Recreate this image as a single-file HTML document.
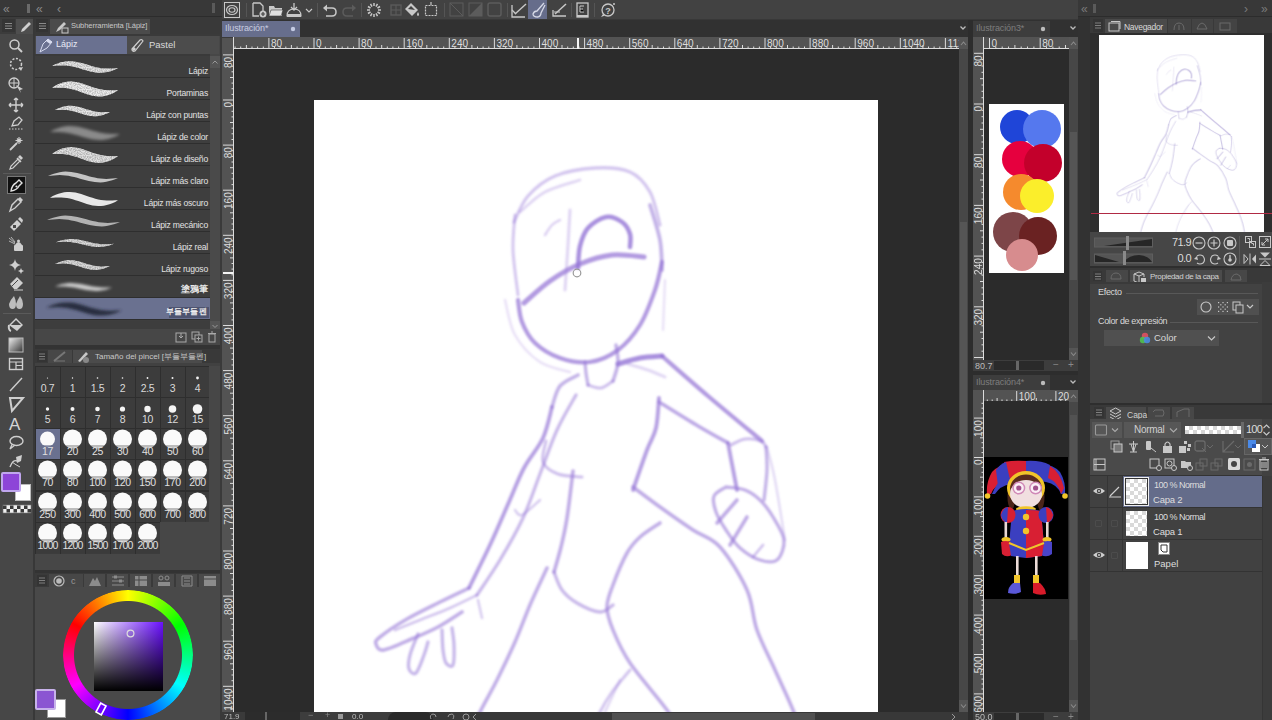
<!DOCTYPE html>
<html><head><meta charset="utf-8">
<style>
*{margin:0;padding:0;box-sizing:border-box}
html,body{width:1272px;height:720px;overflow:hidden;background:#2f2f2f;font-family:"Liberation Sans",sans-serif;color:#ddd}
.a{position:absolute}
.t{white-space:nowrap;line-height:1}
svg{overflow:visible}
</style></head><body>
<svg width="0" height="0" style="position:absolute"><defs><filter id="bl1" x="-20%" y="-50%" width="140%" height="200%"><feGaussianBlur stdDeviation="0.6"/></filter><filter id="sk" x="-5%" y="-5%" width="110%" height="110%"><feGaussianBlur stdDeviation="1.0"/></filter><filter id="skn" x="-5%" y="-5%" width="110%" height="110%"><feGaussianBlur stdDeviation="1.2"/></filter><filter id="gr" x="-10%" y="-50%" width="120%" height="200%"><feTurbulence type="fractalNoise" baseFrequency="0.8" numOctaves="1" seed="3" result="n"/><feColorMatrix in="n" type="matrix" values="0 0 0 0 1  0 0 0 0 1  0 0 0 0 1  0 0 0 -2.0 1.7" result="m"/><feComposite in="SourceGraphic" in2="m" operator="in" result="c"/><feGaussianBlur in="c" stdDeviation="0.5"/></filter><filter id="bl2" x="-20%" y="-50%" width="140%" height="200%"><feGaussianBlur stdDeviation="1.4"/></filter></defs></svg>
<div class="a" style="left:0px;top:0px;width:222px;height:17px;background:#383838;"></div>
<div class="a" style="left:0px;top:16px;width:222px;height:1px;background:#2c2c2c;"></div>
<div class="a t" style="left:3px;top:3px;font-size:12px;color:#8a8a8a;">«</div>
<div class="a" style="left:27px;top:4px;width:3px;height:9px;background:#6a6a6a;"></div>
<div class="a t" style="left:36px;top:3px;font-size:12px;color:#8a8a8a;">«</div>
<div class="a t" style="left:57px;top:3px;font-size:12px;color:#8a8a8a;">‹</div>
<div class="a" style="left:212px;top:3px;width:3px;height:10px;background:#5a5a5a;"></div>
<div class="a" style="left:0px;top:17px;width:33px;height:703px;background:#474747;"></div>
<div class="a" style="left:33px;top:17px;width:2px;height:703px;background:#383838;"></div>
<div class="a" style="left:0px;top:17px;width:33px;height:17px;background:#3c3c3c;"></div>
<div class="a" style="left:2px;top:19px;width:13px;height:13px;background:#353535;"></div>
<svg class="a" style="left:4px;top:22px;" width="9" height="8" viewBox="0 0 9 8"><path d="M1,1.5H8M1,4H8M1,6.5H8" stroke="#8a8a8a" stroke-width="1"/></svg>
<div class="a" style="left:16px;top:19px;width:17px;height:15px;background:#4e4e4e;"></div>
<svg class="a" style="left:19px;top:21px;" width="12" height="12" viewBox="0 0 12 12"><path d="M2,11 L3,8 L10,1 L12,3 L5,10 Z" fill="#cfcfcf"/></svg>
<svg class="a" style="left:8px;top:38px;" width="16" height="16" viewBox="0 0 16 16"><circle cx="6.5" cy="6.5" r="4.5" stroke="#cfcfcf" stroke-width="1.5" fill="none"/><path d="M10,10 L14,14" stroke="#cfcfcf" stroke-width="2"/></svg>
<svg class="a" style="left:8px;top:56px;" width="16" height="16" viewBox="0 0 16 16"><circle cx="8" cy="8" r="5.5" stroke="#cfcfcf" stroke-width="1.5" fill="none" stroke-dasharray="2 1.6"/><path d="M11,12 L15,11 L13,15Z" fill="#cfcfcf"/></svg>
<svg class="a" style="left:8px;top:77px;" width="16" height="16" viewBox="0 0 16 16"><circle cx="6" cy="6" r="5" stroke="#cfcfcf" stroke-width="1.3" fill="none"/><path d="M1,6H11M6,1V11" stroke="#cfcfcf" stroke-width="1"/><path d="M8,8 L15,12 L12,13 L13,16Z" fill="#cfcfcf"/></svg>
<svg class="a" style="left:8px;top:97px;" width="16" height="16" viewBox="0 0 16 16"><path d="M8,1V15M1,8H15M8,1L6,3M8,1L10,3M8,15L6,13M8,15L10,13M1,8L3,6M1,8L3,10M15,8L13,6M15,8L13,10" stroke="#cfcfcf" stroke-width="1.4" fill="none"/></svg>
<svg class="a" style="left:8px;top:115px;" width="16" height="16" viewBox="0 0 16 16"><path d="M4,11 L6,6 L11,2 L14,5 L10,10 Z" stroke="#cfcfcf" stroke-width="1.3" fill="none"/><path d="M1,14H15" stroke="#cfcfcf" stroke-width="1" stroke-dasharray="1.5 1.5"/></svg>
<svg class="a" style="left:8px;top:135px;" width="16" height="16" viewBox="0 0 16 16"><path d="M2,15 L9,8" stroke="#cfcfcf" stroke-width="1.8"/><path d="M11,2V9M7.5,5.5H14.5M9,3.5L13,7.5M13,3.5L9,7.5" stroke="#cfcfcf" stroke-width="1.1"/></svg>
<svg class="a" style="left:8px;top:154px;" width="16" height="16" viewBox="0 0 16 16"><path d="M2,15 L3,12 L10,5 L12,7 L5,14Z" stroke="#cfcfcf" stroke-width="1.2" fill="none"/><path d="M10,3 L12,1 L15,4 L13,6Z" fill="#cfcfcf"/><path d="M9,4 L13,8" stroke="#cfcfcf" stroke-width="1.5"/></svg>
<div class="a" style="left:7px;top:176px;width:19px;height:18px;background:#111;border:1px solid #777"></div>
<svg class="a" style="left:8px;top:177px;" width="17" height="16" viewBox="0 0 17 16"><path d="M3,14 Q4,8 8,6 L11,3 L14,6 L11,9 Q9,13 3,14Z" stroke="#e0e0e0" stroke-width="1.4" fill="none"/><circle cx="8.5" cy="9.5" r="1.1" fill="#e0e0e0"/></svg>
<div class="a" style="left:3px;top:173px;width:28px;height:1px;background:#5a5a5a;"></div>
<svg class="a" style="left:8px;top:196px;" width="16" height="16" viewBox="0 0 16 16"><path d="M2,15 L4,9 L10,3 L13,6 L7,12Z" stroke="#cfcfcf" stroke-width="1.4" fill="none"/><path d="M10,3 L12,1 L15,4 L13,6Z" fill="#cfcfcf"/></svg>
<svg class="a" style="left:8px;top:216px;" width="16" height="16" viewBox="0 0 16 16"><path d="M2,11 L9,4 L13,8 L6,15Z" fill="#cfcfcf"/><path d="M10,3 L12,1 L15,4 L14,7Z" fill="#cfcfcf"/><rect x="5" y="9" width="3" height="3" fill="#474747"/></svg>
<svg class="a" style="left:8px;top:236px;" width="16" height="16" viewBox="0 0 16 16"><path d="M1,2 L7,7M1,5 L7,8M3,1 L7,6" stroke="#cfcfcf" stroke-width="0.8"/><rect x="6" y="9" width="9" height="6" rx="1" fill="#cfcfcf"/><path d="M7,9 Q10.5,3 14,9" fill="#cfcfcf"/><circle cx="10.5" cy="5" r="1.5" fill="#cfcfcf"/></svg>
<svg class="a" style="left:8px;top:258px;" width="16" height="16" viewBox="0 0 16 16"><path d="M7,1 Q7.5,6 13,7 Q7.5,8 7,13 Q6.5,8 1,7 Q6.5,6 7,1Z" fill="#cfcfcf"/><path d="M13,10 Q13.3,12.5 16,13 Q13.3,13.5 13,16 Q12.7,13.5 10,13 Q12.7,12.5 13,10Z" fill="#cfcfcf"/></svg>
<svg class="a" style="left:8px;top:275px;" width="16" height="16" viewBox="0 0 16 16"><path d="M2,9 L9,2 L15,8 L9,14 L6,14Z" fill="#cfcfcf"/><path d="M4,11 L10,5" stroke="#474747" stroke-width="1"/><path d="M6,15H15" stroke="#cfcfcf" stroke-width="1"/></svg>
<svg class="a" style="left:8px;top:294px;" width="16" height="16" viewBox="0 0 16 16"><path d="M1,10 Q3,5 6,2 Q8,6 8,10 Q8,15 4.5,15 Q1,15 1,10Z" fill="#bdbdbd"/><path d="M8,10 Q10,5 12,2 Q15,6 15,10 Q15,15 11.5,15 Q8,15 8,10Z" fill="#bdbdbd"/></svg>
<div class="a" style="left:3px;top:313px;width:28px;height:1px;background:#5a5a5a;"></div>
<svg class="a" style="left:8px;top:317px;" width="16" height="16" viewBox="0 0 16 16"><path d="M1,8 L8,1 L15,8 L9,14 Z" fill="#cfcfcf"/><path d="M3,8 L8,3 L13,8 Z" fill="#474747"/><path d="M1,8 Q0,13 3,14" stroke="#cfcfcf" stroke-width="2" fill="none"/></svg>
<svg class="a" style="left:8px;top:337px;" width="16" height="16" viewBox="0 0 16 16"><defs><linearGradient id="gg" x1="0" y1="0" x2="1" y2="1"><stop offset="0" stop-color="#eee"/><stop offset="1" stop-color="#333"/></linearGradient></defs><rect x="1" y="1" width="14" height="14" fill="url(#gg)" stroke="#bbb" stroke-width="1"/></svg>
<svg class="a" style="left:8px;top:356px;" width="16" height="16" viewBox="0 0 16 16"><rect x="1.5" y="2.5" width="13" height="11" stroke="#cfcfcf" stroke-width="1.4" fill="none"/><path d="M1.5,6H14.5M8,6V13.5M8,9.5H14.5" stroke="#cfcfcf" stroke-width="1.2"/></svg>
<svg class="a" style="left:8px;top:376px;" width="16" height="16" viewBox="0 0 16 16"><path d="M2,15 L14,2" stroke="#cfcfcf" stroke-width="1.4"/></svg>
<svg class="a" style="left:8px;top:396px;" width="16" height="16" viewBox="0 0 16 16"><path d="M2,2 L15,2 L4,15Z" stroke="#cfcfcf" stroke-width="2" fill="none"/></svg>
<div class="a t" style="left:9px;top:416px;font-size:17px;color:#d5d5d5;">A</div>
<svg class="a" style="left:8px;top:434px;" width="16" height="16" viewBox="0 0 16 16"><ellipse cx="8.5" cy="7" rx="6.5" ry="4.5" stroke="#cfcfcf" stroke-width="1.4" fill="none"/><path d="M4,10.5 L2,15 L7,11" stroke="#cfcfcf" stroke-width="1.3" fill="none"/></svg>
<svg class="a" style="left:8px;top:453px;" width="16" height="16" viewBox="0 0 16 16"><path d="M2,14 Q5,6 9,8" stroke="#cfcfcf" stroke-width="1.4" fill="none"/><path d="M8,4 L14,2 L13,8 L9,10Z" fill="#cfcfcf"/><path d="M4,9 Q8,12 12,14" stroke="#cfcfcf" stroke-width="1" fill="none"/></svg>
<div class="a" style="left:15px;top:484px;width:16px;height:17px;background:#ffffff;border:1px solid #bbb"></div>
<div class="a" style="left:1px;top:472px;width:20px;height:20px;background:#8d45d8;border:2px solid #c0a6ee;border-radius:2px"></div>
<svg class="a" style="left:3px;top:505px;" width="28" height="8" viewBox="0 0 28 8"><rect x="0" y="0" width="28" height="8" fill="#f0f0f0" stroke="#777" stroke-width="0.6"/><rect x="0.0" y="0.5" width="3.5" height="3.5" fill="#3a3a3a"/><rect x="3.5" y="4.0" width="3.5" height="3.5" fill="#3a3a3a"/><rect x="7.0" y="0.5" width="3.5" height="3.5" fill="#3a3a3a"/><rect x="10.5" y="4.0" width="3.5" height="3.5" fill="#3a3a3a"/><rect x="14.0" y="0.5" width="3.5" height="3.5" fill="#3a3a3a"/><rect x="17.5" y="4.0" width="3.5" height="3.5" fill="#3a3a3a"/><rect x="21.0" y="0.5" width="3.5" height="3.5" fill="#3a3a3a"/><rect x="24.5" y="4.0" width="3.5" height="3.5" fill="#3a3a3a"/></svg>
<div class="a" style="left:35px;top:17px;width:185px;height:328px;background:#474747;"></div>
<div class="a" style="left:35px;top:17px;width:185px;height:18px;background:#393939;"></div>
<div class="a" style="left:36px;top:19px;width:12px;height:13px;background:#343434;"></div>
<svg class="a" style="left:38px;top:22px;" width="9" height="8" viewBox="0 0 9 8"><path d="M1,1.5H8M1,4H8M1,6.5H8" stroke="#8a8a8a" stroke-width="1"/></svg>
<div class="a" style="left:50px;top:19px;width:100px;height:15px;background:#4b4b4b;"></div>
<svg class="a" style="left:55px;top:21px;" width="14" height="12" viewBox="0 0 14 12"><path d="M1,11 L3,7 L9,1 L11,3 L5,9Z" fill="#c8c8c8"/><rect x="7" y="7" width="6" height="5" stroke="#c8c8c8" stroke-width="1" fill="none"/></svg>
<div class="a t" style="left:71px;top:22px;font-size:7.6px;color:#c8c8c8;letter-spacing:-0.1px">Subherramienta [Lápiz]</div>
<div class="a" style="left:35px;top:34px;width:185px;height:2px;background:#3a3a3a;"></div>
<div class="a" style="left:36px;top:36px;width:91px;height:18px;background:#6a7190;"></div>
<svg class="a" style="left:39px;top:38px;" width="14" height="15" viewBox="0 0 14 15"><path d="M1,14 L4,6 L9,1 L13,4 L8,10Z" stroke="#d8dcef" stroke-width="1" fill="none"/><path d="M9,1 L13,4 L11,6 L7,3Z" fill="#d8dcef"/></svg>
<div class="a t" style="left:56px;top:40px;font-size:9px;color:#e8eaf5;">Lápiz</div>
<div class="a" style="left:127px;top:36px;width:92px;height:18px;background:#4c4c4c;"></div>
<svg class="a" style="left:130px;top:38px;" width="14" height="15" viewBox="0 0 14 15"><path d="M2,11 L10,2 Q12,1 13,3 L5,13 Q3,14 2,12Z" stroke="#d0d0d0" stroke-width="1.2" fill="none"/><path d="M2,12 L4,9 L6,11 L4,13Z" fill="#d0d0d0"/></svg>
<div class="a t" style="left:149px;top:40px;font-size:9.5px;color:#dadada;">Pastel</div>
<div class="a" style="left:35px;top:54px;width:175px;height:267px;background:#3e3e3e;"></div>
<div class="a" style="left:35px;top:77px;width:175px;height:1px;background:#2e2e2e;"></div>
<svg class="a" style="left:0px;top:56px;" width="220" height="22" viewBox="0 0 220 22"><path d="M52.0,9.9 L54.8,8.6 L57.5,7.5 L60.2,6.6 L63.0,5.9 L65.8,5.5 L68.5,5.3 L71.2,5.3 L74.0,5.5 L76.8,5.9 L79.5,6.5 L82.2,7.2 L85.0,8.0 L87.8,8.8 L90.5,9.7 L93.2,10.5 L96.0,11.2 L98.8,11.7 L101.5,12.2 L104.2,12.5 L107.0,12.6 L109.8,12.6 L112.5,12.5 L115.2,12.2 L118.0,12.1 L118.0,12.1 L115.2,13.4 L112.5,14.5 L109.8,15.4 L107.0,16.1 L104.2,16.5 L101.5,16.7 L98.8,16.7 L96.0,16.5 L93.2,16.1 L90.5,15.5 L87.8,14.8 L85.0,14.0 L82.2,13.2 L79.5,12.3 L76.8,11.5 L74.0,10.8 L71.2,10.3 L68.5,9.8 L65.8,9.5 L63.0,9.4 L60.2,9.4 L57.5,9.5 L54.8,9.8 L52.0,9.9Z" fill="#e8e8e8" opacity="0.55" filter="url(#bl1)"/><path d="M52.0,9.9 L54.8,8.6 L57.5,7.5 L60.2,6.6 L63.0,5.9 L65.8,5.5 L68.5,5.3 L71.2,5.3 L74.0,5.5 L76.8,5.9 L79.5,6.5 L82.2,7.2 L85.0,8.0 L87.8,8.8 L90.5,9.7 L93.2,10.5 L96.0,11.2 L98.8,11.7 L101.5,12.2 L104.2,12.5 L107.0,12.6 L109.8,12.6 L112.5,12.5 L115.2,12.2 L118.0,12.1 L118.0,12.1 L115.2,13.4 L112.5,14.5 L109.8,15.4 L107.0,16.1 L104.2,16.5 L101.5,16.7 L98.8,16.7 L96.0,16.5 L93.2,16.1 L90.5,15.5 L87.8,14.8 L85.0,14.0 L82.2,13.2 L79.5,12.3 L76.8,11.5 L74.0,10.8 L71.2,10.3 L68.5,9.8 L65.8,9.5 L63.0,9.4 L60.2,9.4 L57.5,9.5 L54.8,9.8 L52.0,9.9Z" fill="#e8e8e8" opacity="1.0" filter="url(#gr)"/></svg>
<div class="a t" style="right:1064px;top:67px;font-size:8.6px;color:#e2e2e2;text-align:right;letter-spacing:-0.2px">Lápiz</div>
<div class="a" style="left:35px;top:99px;width:175px;height:1px;background:#2e2e2e;"></div>
<svg class="a" style="left:0px;top:78px;" width="220" height="22" viewBox="0 0 220 22"><path d="M52.0,9.8 L54.8,8.0 L57.5,6.6 L60.2,5.5 L63.0,4.6 L65.8,4.0 L68.5,3.6 L71.2,3.6 L74.0,3.8 L76.8,4.2 L79.5,4.8 L82.2,5.6 L85.0,6.5 L87.8,7.5 L90.5,8.4 L93.2,9.4 L96.0,10.2 L98.8,11.0 L101.5,11.5 L104.2,12.0 L107.0,12.2 L109.8,12.3 L112.5,12.3 L115.2,12.2 L118.0,12.2 L118.0,12.2 L115.2,14.0 L112.5,15.4 L109.8,16.5 L107.0,17.4 L104.2,18.0 L101.5,18.4 L98.8,18.4 L96.0,18.2 L93.2,17.8 L90.5,17.2 L87.8,16.4 L85.0,15.5 L82.2,14.5 L79.5,13.6 L76.8,12.6 L74.0,11.8 L71.2,11.0 L68.5,10.5 L65.8,10.0 L63.0,9.8 L60.2,9.7 L57.5,9.7 L54.8,9.8 L52.0,9.8Z" fill="#f0f0f0" opacity="0.55" filter="url(#bl1)"/><path d="M52.0,9.8 L54.8,8.0 L57.5,6.6 L60.2,5.5 L63.0,4.6 L65.8,4.0 L68.5,3.6 L71.2,3.6 L74.0,3.8 L76.8,4.2 L79.5,4.8 L82.2,5.6 L85.0,6.5 L87.8,7.5 L90.5,8.4 L93.2,9.4 L96.0,10.2 L98.8,11.0 L101.5,11.5 L104.2,12.0 L107.0,12.2 L109.8,12.3 L112.5,12.3 L115.2,12.2 L118.0,12.2 L118.0,12.2 L115.2,14.0 L112.5,15.4 L109.8,16.5 L107.0,17.4 L104.2,18.0 L101.5,18.4 L98.8,18.4 L96.0,18.2 L93.2,17.8 L90.5,17.2 L87.8,16.4 L85.0,15.5 L82.2,14.5 L79.5,13.6 L76.8,12.6 L74.0,11.8 L71.2,11.0 L68.5,10.5 L65.8,10.0 L63.0,9.8 L60.2,9.7 L57.5,9.7 L54.8,9.8 L52.0,9.8Z" fill="#f0f0f0" opacity="1.0" filter="url(#gr)"/></svg>
<div class="a t" style="right:1064px;top:89px;font-size:8.6px;color:#e2e2e2;text-align:right;letter-spacing:-0.2px">Portaminas</div>
<div class="a" style="left:35px;top:121px;width:175px;height:1px;background:#2e2e2e;"></div>
<svg class="a" style="left:0px;top:100px;" width="220" height="22" viewBox="0 0 220 22"><path d="M55.0,10.1 L57.3,8.8 L59.6,7.9 L61.9,7.1 L64.2,6.4 L66.5,6.0 L68.8,5.8 L71.0,5.7 L73.3,5.9 L75.6,6.2 L77.9,6.7 L80.2,7.3 L82.5,8.0 L84.8,8.7 L87.1,9.4 L89.4,10.1 L91.7,10.8 L94.0,11.3 L96.2,11.7 L98.5,12.0 L100.8,12.1 L103.1,12.2 L105.4,12.1 L107.7,12.0 L110.0,11.9 L110.0,11.9 L107.7,13.2 L105.4,14.1 L103.1,14.9 L100.8,15.6 L98.5,16.0 L96.2,16.2 L94.0,16.3 L91.7,16.1 L89.4,15.8 L87.1,15.3 L84.8,14.7 L82.5,14.0 L80.2,13.3 L77.9,12.6 L75.6,11.9 L73.3,11.2 L71.0,10.7 L68.8,10.3 L66.5,10.0 L64.2,9.9 L61.9,9.8 L59.6,9.9 L57.3,10.0 L55.0,10.1Z" fill="#e8e8e8" opacity="0.55" filter="url(#bl1)"/><path d="M55.0,10.1 L57.3,8.8 L59.6,7.9 L61.9,7.1 L64.2,6.4 L66.5,6.0 L68.8,5.8 L71.0,5.7 L73.3,5.9 L75.6,6.2 L77.9,6.7 L80.2,7.3 L82.5,8.0 L84.8,8.7 L87.1,9.4 L89.4,10.1 L91.7,10.8 L94.0,11.3 L96.2,11.7 L98.5,12.0 L100.8,12.1 L103.1,12.2 L105.4,12.1 L107.7,12.0 L110.0,11.9 L110.0,11.9 L107.7,13.2 L105.4,14.1 L103.1,14.9 L100.8,15.6 L98.5,16.0 L96.2,16.2 L94.0,16.3 L91.7,16.1 L89.4,15.8 L87.1,15.3 L84.8,14.7 L82.5,14.0 L80.2,13.3 L77.9,12.6 L75.6,11.9 L73.3,11.2 L71.0,10.7 L68.8,10.3 L66.5,10.0 L64.2,9.9 L61.9,9.8 L59.6,9.9 L57.3,10.0 L55.0,10.1Z" fill="#e8e8e8" opacity="1.0" filter="url(#gr)"/></svg>
<div class="a t" style="right:1064px;top:111px;font-size:8.6px;color:#e2e2e2;text-align:right;letter-spacing:-0.2px">Lápiz con puntas</div>
<div class="a" style="left:35px;top:143px;width:175px;height:1px;background:#2e2e2e;"></div>
<svg class="a" style="left:0px;top:122px;" width="220" height="22" viewBox="0 0 220 22"><path d="M50.0,9.9 L52.9,8.3 L55.8,7.0 L58.8,5.9 L61.7,5.1 L64.6,4.5 L67.5,4.1 L70.4,4.0 L73.3,4.2 L76.2,4.5 L79.2,5.0 L82.1,5.7 L85.0,6.5 L87.9,7.3 L90.8,8.2 L93.8,9.0 L96.7,9.8 L99.6,10.5 L102.5,11.0 L105.4,11.5 L108.3,11.7 L111.2,11.9 L114.2,11.9 L117.1,11.9 L120.0,12.1 L120.0,12.1 L117.1,13.7 L114.2,15.0 L111.2,16.1 L108.3,16.9 L105.4,17.5 L102.5,17.9 L99.6,18.0 L96.7,17.8 L93.8,17.5 L90.8,17.0 L87.9,16.3 L85.0,15.5 L82.1,14.7 L79.2,13.8 L76.2,13.0 L73.3,12.2 L70.4,11.5 L67.5,11.0 L64.6,10.5 L61.7,10.3 L58.8,10.1 L55.8,10.1 L52.9,10.1 L50.0,9.9Z" fill="#bdbdbd" opacity="0.6" filter="url(#bl2)"/></svg>
<div class="a t" style="right:1064px;top:133px;font-size:8.6px;color:#e2e2e2;text-align:right;letter-spacing:-0.2px">Lápiz de color</div>
<div class="a" style="left:35px;top:165px;width:175px;height:1px;background:#2e2e2e;"></div>
<svg class="a" style="left:0px;top:144px;" width="220" height="22" viewBox="0 0 220 22"><path d="M52.0,9.8 L54.8,7.9 L57.5,6.5 L60.2,5.3 L63.0,4.3 L65.8,3.7 L68.5,3.3 L71.2,3.1 L74.0,3.3 L76.8,3.7 L79.5,4.3 L82.2,5.1 L85.0,6.0 L87.8,7.0 L90.5,8.0 L93.2,8.9 L96.0,9.8 L98.8,10.5 L101.5,11.2 L104.2,11.6 L107.0,11.9 L109.8,12.1 L112.5,12.1 L115.2,12.1 L118.0,12.2 L118.0,12.2 L115.2,14.1 L112.5,15.5 L109.8,16.7 L107.0,17.7 L104.2,18.3 L101.5,18.7 L98.8,18.9 L96.0,18.7 L93.2,18.3 L90.5,17.7 L87.8,16.9 L85.0,16.0 L82.2,15.0 L79.5,14.0 L76.8,13.1 L74.0,12.2 L71.2,11.5 L68.5,10.8 L65.8,10.4 L63.0,10.1 L60.2,9.9 L57.5,9.9 L54.8,9.9 L52.0,9.8Z" fill="#e8e8e8" opacity="0.52" filter="url(#bl1)"/><path d="M52.0,9.8 L54.8,7.9 L57.5,6.5 L60.2,5.3 L63.0,4.3 L65.8,3.7 L68.5,3.3 L71.2,3.1 L74.0,3.3 L76.8,3.7 L79.5,4.3 L82.2,5.1 L85.0,6.0 L87.8,7.0 L90.5,8.0 L93.2,8.9 L96.0,9.8 L98.8,10.5 L101.5,11.2 L104.2,11.6 L107.0,11.9 L109.8,12.1 L112.5,12.1 L115.2,12.1 L118.0,12.2 L118.0,12.2 L115.2,14.1 L112.5,15.5 L109.8,16.7 L107.0,17.7 L104.2,18.3 L101.5,18.7 L98.8,18.9 L96.0,18.7 L93.2,18.3 L90.5,17.7 L87.8,16.9 L85.0,16.0 L82.2,15.0 L79.5,14.0 L76.8,13.1 L74.0,12.2 L71.2,11.5 L68.5,10.8 L65.8,10.4 L63.0,10.1 L60.2,9.9 L57.5,9.9 L54.8,9.9 L52.0,9.8Z" fill="#e8e8e8" opacity="0.95" filter="url(#gr)"/></svg>
<div class="a t" style="right:1064px;top:155px;font-size:8.6px;color:#e2e2e2;text-align:right;letter-spacing:-0.2px">Lápiz de diseño</div>
<div class="a" style="left:35px;top:187px;width:175px;height:1px;background:#2e2e2e;"></div>
<svg class="a" style="left:0px;top:166px;" width="220" height="22" viewBox="0 0 220 22"><path d="M48.0,9.9 L50.9,8.7 L53.8,7.7 L56.8,6.9 L59.7,6.2 L62.6,5.8 L65.5,5.6 L68.4,5.7 L71.3,5.9 L74.2,6.4 L77.2,7.0 L80.1,7.7 L83.0,8.5 L85.9,9.3 L88.8,10.2 L91.8,10.9 L94.7,11.6 L97.6,12.2 L100.5,12.6 L103.4,12.8 L106.3,12.9 L109.2,12.8 L112.2,12.6 L115.1,12.3 L118.0,12.1 L118.0,12.1 L115.1,13.3 L112.2,14.3 L109.2,15.1 L106.3,15.8 L103.4,16.2 L100.5,16.4 L97.6,16.3 L94.7,16.1 L91.8,15.6 L88.8,15.0 L85.9,14.3 L83.0,13.5 L80.1,12.7 L77.2,11.8 L74.2,11.1 L71.3,10.4 L68.4,9.8 L65.5,9.4 L62.6,9.2 L59.7,9.1 L56.8,9.2 L53.8,9.4 L50.9,9.7 L48.0,9.9Z" fill="#dcdcdc" opacity="0.85" filter="url(#bl1)"/></svg>
<div class="a t" style="right:1064px;top:177px;font-size:8.6px;color:#e2e2e2;text-align:right;letter-spacing:-0.2px">Lápiz más claro</div>
<div class="a" style="left:35px;top:209px;width:175px;height:1px;background:#2e2e2e;"></div>
<svg class="a" style="left:0px;top:188px;" width="220" height="22" viewBox="0 0 220 22"><path d="M50.0,9.8 L52.8,8.1 L55.7,6.8 L58.5,5.7 L61.3,4.9 L64.2,4.3 L67.0,4.0 L69.8,4.0 L72.7,4.2 L75.5,4.6 L78.3,5.3 L81.2,6.1 L84.0,7.0 L86.8,8.0 L89.7,8.9 L92.5,9.8 L95.3,10.7 L98.2,11.4 L101.0,11.9 L103.8,12.3 L106.7,12.5 L109.5,12.6 L112.3,12.5 L115.2,12.3 L118.0,12.2 L118.0,12.2 L115.2,13.9 L112.3,15.2 L109.5,16.3 L106.7,17.1 L103.8,17.7 L101.0,18.0 L98.2,18.0 L95.3,17.8 L92.5,17.4 L89.7,16.7 L86.8,15.9 L84.0,15.0 L81.2,14.0 L78.3,13.1 L75.5,12.2 L72.7,11.3 L69.8,10.6 L67.0,10.1 L64.2,9.7 L61.3,9.5 L58.5,9.4 L55.7,9.5 L52.8,9.7 L50.0,9.8Z" fill="#f2f2f2" opacity="0.95" filter="url(#bl1)"/></svg>
<div class="a t" style="right:1064px;top:199px;font-size:8.6px;color:#e2e2e2;text-align:right;letter-spacing:-0.2px">Lápiz más oscuro</div>
<div class="a" style="left:35px;top:231px;width:175px;height:1px;background:#2e2e2e;"></div>
<svg class="a" style="left:0px;top:210px;" width="220" height="22" viewBox="0 0 220 22"><path d="M47.0,9.9 L50.0,8.7 L53.1,7.7 L56.1,6.9 L59.2,6.2 L62.2,5.8 L65.2,5.6 L68.3,5.7 L71.3,5.9 L74.4,6.4 L77.4,7.0 L80.5,7.7 L83.5,8.5 L86.5,9.3 L89.6,10.2 L92.6,10.9 L95.7,11.6 L98.7,12.2 L101.8,12.6 L104.8,12.8 L107.8,12.9 L110.9,12.8 L113.9,12.6 L117.0,12.3 L120.0,12.1 L120.0,12.1 L117.0,13.3 L113.9,14.3 L110.9,15.1 L107.8,15.8 L104.8,16.2 L101.8,16.4 L98.7,16.3 L95.7,16.1 L92.6,15.6 L89.6,15.0 L86.5,14.3 L83.5,13.5 L80.5,12.7 L77.4,11.8 L74.4,11.1 L71.3,10.4 L68.3,9.8 L65.2,9.4 L62.2,9.2 L59.2,9.1 L56.1,9.2 L53.1,9.4 L50.0,9.7 L47.0,9.9Z" fill="#cfcfcf" opacity="0.8" filter="url(#bl1)"/></svg>
<div class="a t" style="right:1064px;top:221px;font-size:8.6px;color:#e2e2e2;text-align:right;letter-spacing:-0.2px">Lápiz mecánico</div>
<div class="a" style="left:35px;top:253px;width:175px;height:1px;background:#2e2e2e;"></div>
<svg class="a" style="left:0px;top:232px;" width="220" height="22" viewBox="0 0 220 22"><path d="M56.0,10.2 L58.4,9.3 L60.8,8.6 L63.2,7.9 L65.7,7.5 L68.1,7.2 L70.5,7.0 L72.9,7.0 L75.3,7.2 L77.8,7.5 L80.2,7.9 L82.6,8.4 L85.0,9.0 L87.4,9.6 L89.8,10.2 L92.2,10.7 L94.7,11.2 L97.1,11.6 L99.5,12.0 L101.9,12.1 L104.3,12.2 L106.8,12.2 L109.2,12.1 L111.6,11.9 L114.0,11.8 L114.0,11.8 L111.6,12.7 L109.2,13.4 L106.8,14.1 L104.3,14.5 L101.9,14.8 L99.5,15.0 L97.1,15.0 L94.7,14.8 L92.2,14.5 L89.8,14.1 L87.4,13.6 L85.0,13.0 L82.6,12.4 L80.2,11.8 L77.8,11.3 L75.3,10.8 L72.9,10.4 L70.5,10.0 L68.1,9.9 L65.7,9.8 L63.2,9.8 L60.8,9.9 L58.4,10.1 L56.0,10.2Z" fill="#e0e0e0" opacity="0.52" filter="url(#bl1)"/><path d="M56.0,10.2 L58.4,9.3 L60.8,8.6 L63.2,7.9 L65.7,7.5 L68.1,7.2 L70.5,7.0 L72.9,7.0 L75.3,7.2 L77.8,7.5 L80.2,7.9 L82.6,8.4 L85.0,9.0 L87.4,9.6 L89.8,10.2 L92.2,10.7 L94.7,11.2 L97.1,11.6 L99.5,12.0 L101.9,12.1 L104.3,12.2 L106.8,12.2 L109.2,12.1 L111.6,11.9 L114.0,11.8 L114.0,11.8 L111.6,12.7 L109.2,13.4 L106.8,14.1 L104.3,14.5 L101.9,14.8 L99.5,15.0 L97.1,15.0 L94.7,14.8 L92.2,14.5 L89.8,14.1 L87.4,13.6 L85.0,13.0 L82.6,12.4 L80.2,11.8 L77.8,11.3 L75.3,10.8 L72.9,10.4 L70.5,10.0 L68.1,9.9 L65.7,9.8 L63.2,9.8 L60.8,9.9 L58.4,10.1 L56.0,10.2Z" fill="#e0e0e0" opacity="0.95" filter="url(#gr)"/></svg>
<div class="a t" style="right:1064px;top:243px;font-size:8.6px;color:#e2e2e2;text-align:right;letter-spacing:-0.2px">Lápiz real</div>
<div class="a" style="left:35px;top:275px;width:175px;height:1px;background:#2e2e2e;"></div>
<svg class="a" style="left:0px;top:254px;" width="220" height="22" viewBox="0 0 220 22"><path d="M55.0,10.1 L57.3,8.9 L59.6,8.0 L61.9,7.3 L64.2,6.7 L66.5,6.3 L68.8,6.1 L71.0,6.2 L73.3,6.3 L75.6,6.7 L77.9,7.2 L80.2,7.8 L82.5,8.5 L84.8,9.2 L87.1,9.9 L89.4,10.6 L91.7,11.2 L94.0,11.7 L96.2,12.1 L98.5,12.3 L100.8,12.4 L103.1,12.4 L105.4,12.3 L107.7,12.1 L110.0,11.9 L110.0,11.9 L107.7,13.1 L105.4,14.0 L103.1,14.7 L100.8,15.3 L98.5,15.7 L96.2,15.9 L94.0,15.8 L91.7,15.7 L89.4,15.3 L87.1,14.8 L84.8,14.2 L82.5,13.5 L80.2,12.8 L77.9,12.1 L75.6,11.4 L73.3,10.8 L71.0,10.3 L68.8,9.9 L66.5,9.7 L64.2,9.6 L61.9,9.6 L59.6,9.7 L57.3,9.9 L55.0,10.1Z" fill="#e0e0e0" opacity="0.52" filter="url(#bl1)"/><path d="M55.0,10.1 L57.3,8.9 L59.6,8.0 L61.9,7.3 L64.2,6.7 L66.5,6.3 L68.8,6.1 L71.0,6.2 L73.3,6.3 L75.6,6.7 L77.9,7.2 L80.2,7.8 L82.5,8.5 L84.8,9.2 L87.1,9.9 L89.4,10.6 L91.7,11.2 L94.0,11.7 L96.2,12.1 L98.5,12.3 L100.8,12.4 L103.1,12.4 L105.4,12.3 L107.7,12.1 L110.0,11.9 L110.0,11.9 L107.7,13.1 L105.4,14.0 L103.1,14.7 L100.8,15.3 L98.5,15.7 L96.2,15.9 L94.0,15.8 L91.7,15.7 L89.4,15.3 L87.1,14.8 L84.8,14.2 L82.5,13.5 L80.2,12.8 L77.9,12.1 L75.6,11.4 L73.3,10.8 L71.0,10.3 L68.8,9.9 L66.5,9.7 L64.2,9.6 L61.9,9.6 L59.6,9.7 L57.3,9.9 L55.0,10.1Z" fill="#e0e0e0" opacity="0.95" filter="url(#gr)"/></svg>
<div class="a t" style="right:1064px;top:265px;font-size:8.6px;color:#e2e2e2;text-align:right;letter-spacing:-0.2px">Lápiz rugoso</div>
<div class="a" style="left:35px;top:297px;width:175px;height:1px;background:#2e2e2e;"></div>
<svg class="a" style="left:0px;top:276px;" width="220" height="22" viewBox="0 0 220 22"><path d="M55.0,10.4 L57.4,9.5 L59.8,8.7 L62.1,8.1 L64.5,7.7 L66.9,7.3 L69.2,7.1 L71.6,7.1 L74.0,7.2 L76.4,7.4 L78.8,7.7 L81.1,8.1 L83.5,8.5 L85.9,9.0 L88.2,9.5 L90.6,10.0 L93.0,10.4 L95.4,10.8 L97.8,11.1 L100.1,11.3 L102.5,11.5 L104.9,11.5 L107.2,11.6 L109.6,11.6 L112.0,11.6 L112.0,11.6 L109.6,12.5 L107.2,13.3 L104.9,13.9 L102.5,14.3 L100.1,14.7 L97.8,14.9 L95.4,14.9 L93.0,14.8 L90.6,14.6 L88.2,14.3 L85.9,13.9 L83.5,13.5 L81.1,13.0 L78.8,12.5 L76.4,12.0 L74.0,11.6 L71.6,11.2 L69.2,10.9 L66.9,10.7 L64.5,10.5 L62.1,10.5 L59.8,10.4 L57.4,10.4 L55.0,10.4Z" fill="#f0f0f0" opacity="0.8" filter="url(#bl2)"/></svg>
<div class="a t" style="right:1064px;top:285px;font-size:9px;color:#e8e8e8;text-align:right;font-weight:bold;letter-spacing:0px">塗鴉筆</div>
<div class="a" style="left:35px;top:298px;width:175px;height:22px;background:#6a7190;"></div>
<div class="a" style="left:35px;top:319px;width:175px;height:1px;background:#2e2e2e;"></div>
<svg class="a" style="left:0px;top:298px;" width="220" height="22" viewBox="0 0 220 22"><path d="M46.0,9.8 L49.2,8.2 L52.3,7.0 L55.5,6.0 L58.7,5.2 L61.8,4.7 L65.0,4.4 L68.2,4.4 L71.3,4.6 L74.5,5.1 L77.7,5.8 L80.8,6.6 L84.0,7.5 L87.2,8.5 L90.3,9.4 L93.5,10.3 L96.7,11.1 L99.8,11.8 L103.0,12.3 L106.2,12.6 L109.3,12.8 L112.5,12.8 L115.7,12.6 L118.8,12.4 L122.0,12.2 L122.0,12.2 L118.8,13.8 L115.7,15.0 L112.5,16.0 L109.3,16.8 L106.2,17.3 L103.0,17.6 L99.8,17.6 L96.7,17.4 L93.5,16.9 L90.3,16.2 L87.2,15.4 L84.0,14.5 L80.8,13.5 L77.7,12.6 L74.5,11.7 L71.3,10.9 L68.2,10.2 L65.0,9.7 L61.8,9.4 L58.7,9.2 L55.5,9.2 L52.3,9.4 L49.2,9.6 L46.0,9.8Z" fill="#1f2230" opacity="0.85" filter="url(#bl2)"/></svg>
<div class="a" style="left:169px;top:307px;width:40px;height:11px;background:#4e5470;"></div>
<div class="a t" style="right:1065px;top:308px;font-size:8px;color:#eeeeee;text-align:right;font-weight:bold;letter-spacing:0.3px">부들부들펜</div>
<div class="a" style="left:35px;top:54px;width:175px;height:2px;background:#3a3a3a;"></div>
<div class="a" style="left:210px;top:56px;width:10px;height:265px;background:#4a4a4a;"></div>
<div class="a" style="left:210px;top:56px;width:10px;height:12px;background:#555;"></div>
<svg class="a" style="left:211px;top:58px;" width="8" height="8" viewBox="0 0 8 8"><path d="M1.5,5.5 L4,3 L6.5,5.5" stroke="#999" stroke-width="1" fill="none"/></svg>
<div class="a" style="left:35px;top:321px;width:185px;height:8px;background:#3d3d3d;"></div>
<div class="a" style="left:210px;top:321px;width:10px;height:10px;background:#555;"></div>
<svg class="a" style="left:211px;top:322px;" width="8" height="8" viewBox="0 0 8 8"><path d="M1.5,3 L4,5.5 L6.5,3" stroke="#999" stroke-width="1" fill="none"/></svg>
<div class="a" style="left:35px;top:329px;width:185px;height:16px;background:#474747;"></div>
<svg class="a" style="left:175px;top:331px;" width="12" height="12" viewBox="0 0 12 12"><rect x="1" y="2" width="10" height="9" stroke="#aaa" fill="none"/><path d="M6,2V7M4,5L6,7L8,5" stroke="#aaa" fill="none"/></svg>
<svg class="a" style="left:191px;top:331px;" width="12" height="12" viewBox="0 0 12 12"><rect x="1" y="1" width="7" height="7" stroke="#aaa" fill="none"/><rect x="4" y="4" width="7" height="7" stroke="#aaa" fill="#474747"/><path d="M7.5,5.5V9.5M5.5,7.5H9.5" stroke="#aaa"/></svg>
<svg class="a" style="left:207px;top:331px;" width="10" height="12" viewBox="0 0 10 12"><rect x="2" y="3" width="6" height="8" stroke="#aaa" fill="none"/><path d="M1,2.5H9M4,1H6" stroke="#aaa"/></svg>
<div class="a" style="left:35px;top:345px;width:185px;height:4px;background:#333;"></div>
<div class="a" style="left:35px;top:349px;width:185px;height:221px;background:#474747;"></div>
<div class="a" style="left:35px;top:349px;width:185px;height:14px;background:#393939;"></div>
<div class="a" style="left:37px;top:351px;width:10px;height:11px;background:#343434;"></div>
<svg class="a" style="left:38px;top:353px;" width="8" height="7" viewBox="0 0 8 7"><path d="M1,1H7M1,3.5H7M1,6H7" stroke="#888" stroke-width="0.9"/></svg>
<div class="a" style="left:48px;top:350px;width:24px;height:13px;background:#474747;"></div>
<svg class="a" style="left:53px;top:351px;" width="14" height="11" viewBox="0 0 14 11"><path d="M1,10 L12,1" stroke="#777" stroke-width="2"/><path d="M1,10 H12" stroke="#777" stroke-width="1"/></svg>
<div class="a" style="left:73px;top:350px;width:129px;height:13px;background:#4b4b4b;"></div>
<svg class="a" style="left:77px;top:351px;" width="14" height="12" viewBox="0 0 14 12"><path d="M1,10 L9,1 L11,3 L3,11Z" fill="#c8c8c8"/><circle cx="9" cy="9" r="3" fill="#888"/></svg>
<div class="a t" style="left:95px;top:353px;font-size:8px;color:#c8c8c8;">Tamaño del pincel [부들부들펜]</div>
<div class="a" style="left:35px;top:363px;width:185px;height:3px;background:#414141;"></div>
<div class="a" style="left:35px;top:366px;width:175px;height:188px;background:#2e2e2e;"></div>
<div class="a" style="left:36px;top:367px;width:24px;height:30px;background:#3c3c3c;"></div>
<svg class="a" style="left:35px;top:366px;" width="25" height="25" viewBox="0 0 25 25"><circle cx="12.5" cy="12" r="0.6" fill="#f4f4f4"/></svg>
<div class="a t" style="left:35px;top:383px;font-size:10.5px;color:#dadada;width:25px;text-align:center;letter-spacing:-0.3px">0.7</div>
<div class="a" style="left:61px;top:367px;width:24px;height:30px;background:#3c3c3c;"></div>
<svg class="a" style="left:60px;top:366px;" width="25" height="25" viewBox="0 0 25 25"><circle cx="12.5" cy="12" r="0.7" fill="#f4f4f4"/></svg>
<div class="a t" style="left:60px;top:383px;font-size:10.5px;color:#dadada;width:25px;text-align:center;letter-spacing:-0.3px">1</div>
<div class="a" style="left:86px;top:367px;width:24px;height:30px;background:#3c3c3c;"></div>
<svg class="a" style="left:85px;top:366px;" width="25" height="25" viewBox="0 0 25 25"><circle cx="12.5" cy="12" r="0.8" fill="#f4f4f4"/></svg>
<div class="a t" style="left:85px;top:383px;font-size:10.5px;color:#dadada;width:25px;text-align:center;letter-spacing:-0.3px">1.5</div>
<div class="a" style="left:111px;top:367px;width:24px;height:30px;background:#3c3c3c;"></div>
<svg class="a" style="left:110px;top:366px;" width="25" height="25" viewBox="0 0 25 25"><circle cx="12.5" cy="12" r="0.8" fill="#f4f4f4"/></svg>
<div class="a t" style="left:110px;top:383px;font-size:10.5px;color:#dadada;width:25px;text-align:center;letter-spacing:-0.3px">2</div>
<div class="a" style="left:136px;top:367px;width:24px;height:30px;background:#3c3c3c;"></div>
<svg class="a" style="left:135px;top:366px;" width="25" height="25" viewBox="0 0 25 25"><circle cx="12.5" cy="12" r="0.9" fill="#f4f4f4"/></svg>
<div class="a t" style="left:135px;top:383px;font-size:10.5px;color:#dadada;width:25px;text-align:center;letter-spacing:-0.3px">2.5</div>
<div class="a" style="left:161px;top:367px;width:24px;height:30px;background:#3c3c3c;"></div>
<svg class="a" style="left:160px;top:366px;" width="25" height="25" viewBox="0 0 25 25"><circle cx="12.5" cy="12" r="1.0" fill="#f4f4f4"/></svg>
<div class="a t" style="left:160px;top:383px;font-size:10.5px;color:#dadada;width:25px;text-align:center;letter-spacing:-0.3px">3</div>
<div class="a" style="left:186px;top:367px;width:24px;height:30px;background:#3c3c3c;"></div>
<svg class="a" style="left:185px;top:366px;" width="25" height="25" viewBox="0 0 25 25"><circle cx="12.5" cy="12" r="1.4" fill="#f4f4f4"/></svg>
<div class="a t" style="left:185px;top:383px;font-size:10.5px;color:#dadada;width:25px;text-align:center;letter-spacing:-0.3px">4</div>
<div class="a" style="left:36px;top:398px;width:24px;height:30px;background:#3c3c3c;"></div>
<svg class="a" style="left:35px;top:397px;" width="25" height="25" viewBox="0 0 25 25"><circle cx="12.5" cy="12" r="1.7" fill="#f4f4f4"/></svg>
<div class="a t" style="left:35px;top:414px;font-size:10.5px;color:#dadada;width:25px;text-align:center;letter-spacing:-0.3px">5</div>
<div class="a" style="left:61px;top:398px;width:24px;height:30px;background:#3c3c3c;"></div>
<svg class="a" style="left:60px;top:397px;" width="25" height="25" viewBox="0 0 25 25"><circle cx="12.5" cy="12" r="2.0" fill="#f4f4f4"/></svg>
<div class="a t" style="left:60px;top:414px;font-size:10.5px;color:#dadada;width:25px;text-align:center;letter-spacing:-0.3px">6</div>
<div class="a" style="left:86px;top:398px;width:24px;height:30px;background:#3c3c3c;"></div>
<svg class="a" style="left:85px;top:397px;" width="25" height="25" viewBox="0 0 25 25"><circle cx="12.5" cy="12" r="2.3" fill="#f4f4f4"/></svg>
<div class="a t" style="left:85px;top:414px;font-size:10.5px;color:#dadada;width:25px;text-align:center;letter-spacing:-0.3px">7</div>
<div class="a" style="left:111px;top:398px;width:24px;height:30px;background:#3c3c3c;"></div>
<svg class="a" style="left:110px;top:397px;" width="25" height="25" viewBox="0 0 25 25"><circle cx="12.5" cy="12" r="2.6" fill="#f4f4f4"/></svg>
<div class="a t" style="left:110px;top:414px;font-size:10.5px;color:#dadada;width:25px;text-align:center;letter-spacing:-0.3px">8</div>
<div class="a" style="left:136px;top:398px;width:24px;height:30px;background:#3c3c3c;"></div>
<svg class="a" style="left:135px;top:397px;" width="25" height="25" viewBox="0 0 25 25"><circle cx="12.5" cy="12" r="3.2" fill="#f4f4f4"/></svg>
<div class="a t" style="left:135px;top:414px;font-size:10.5px;color:#dadada;width:25px;text-align:center;letter-spacing:-0.3px">10</div>
<div class="a" style="left:161px;top:398px;width:24px;height:30px;background:#3c3c3c;"></div>
<svg class="a" style="left:160px;top:397px;" width="25" height="25" viewBox="0 0 25 25"><circle cx="12.5" cy="12" r="3.8" fill="#f4f4f4"/></svg>
<div class="a t" style="left:160px;top:414px;font-size:10.5px;color:#dadada;width:25px;text-align:center;letter-spacing:-0.3px">12</div>
<div class="a" style="left:186px;top:398px;width:24px;height:30px;background:#3c3c3c;"></div>
<svg class="a" style="left:185px;top:397px;" width="25" height="25" viewBox="0 0 25 25"><circle cx="12.5" cy="12" r="4.8" fill="#f4f4f4"/></svg>
<div class="a t" style="left:185px;top:414px;font-size:10.5px;color:#dadada;width:25px;text-align:center;letter-spacing:-0.3px">15</div>
<div class="a" style="left:36px;top:429px;width:24px;height:30px;background:#6a7190;"></div>
<svg class="a" style="left:35px;top:428px;" width="25" height="25" viewBox="0 0 25 25"><circle cx="12.5" cy="11" r="7.5" fill="#fafafa"/></svg>
<div class="a" style="left:36px;top:445px;width:24px;height:13px;background:rgba(106,113,144,0.6);"></div>
<div class="a t" style="left:35px;top:446px;font-size:10.5px;color:#e0e0e0;width:25px;text-align:center;letter-spacing:-0.3px">17</div>
<div class="a" style="left:61px;top:429px;width:24px;height:30px;background:#3c3c3c;"></div>
<svg class="a" style="left:60px;top:428px;" width="25" height="25" viewBox="0 0 25 25"><circle cx="12.5" cy="11" r="9.5" fill="#fafafa"/></svg>
<div class="a" style="left:61px;top:445px;width:24px;height:13px;background:rgba(60,60,60,0.32);"></div>
<div class="a t" style="left:60px;top:446px;font-size:10.5px;color:#e0e0e0;width:25px;text-align:center;letter-spacing:-0.3px">20</div>
<div class="a" style="left:86px;top:429px;width:24px;height:30px;background:#3c3c3c;"></div>
<svg class="a" style="left:85px;top:428px;" width="25" height="25" viewBox="0 0 25 25"><circle cx="12.5" cy="11" r="9.5" fill="#fafafa"/></svg>
<div class="a" style="left:86px;top:445px;width:24px;height:13px;background:rgba(60,60,60,0.32);"></div>
<div class="a t" style="left:85px;top:446px;font-size:10.5px;color:#e0e0e0;width:25px;text-align:center;letter-spacing:-0.3px">25</div>
<div class="a" style="left:111px;top:429px;width:24px;height:30px;background:#3c3c3c;"></div>
<svg class="a" style="left:110px;top:428px;" width="25" height="25" viewBox="0 0 25 25"><circle cx="12.5" cy="11" r="9.5" fill="#fafafa"/></svg>
<div class="a" style="left:111px;top:445px;width:24px;height:13px;background:rgba(60,60,60,0.32);"></div>
<div class="a t" style="left:110px;top:446px;font-size:10.5px;color:#e0e0e0;width:25px;text-align:center;letter-spacing:-0.3px">30</div>
<div class="a" style="left:136px;top:429px;width:24px;height:30px;background:#3c3c3c;"></div>
<svg class="a" style="left:135px;top:428px;" width="25" height="25" viewBox="0 0 25 25"><circle cx="12.5" cy="11" r="9.5" fill="#fafafa"/></svg>
<div class="a" style="left:136px;top:445px;width:24px;height:13px;background:rgba(60,60,60,0.32);"></div>
<div class="a t" style="left:135px;top:446px;font-size:10.5px;color:#e0e0e0;width:25px;text-align:center;letter-spacing:-0.3px">40</div>
<div class="a" style="left:161px;top:429px;width:24px;height:30px;background:#3c3c3c;"></div>
<svg class="a" style="left:160px;top:428px;" width="25" height="25" viewBox="0 0 25 25"><circle cx="12.5" cy="11" r="9.5" fill="#fafafa"/></svg>
<div class="a" style="left:161px;top:445px;width:24px;height:13px;background:rgba(60,60,60,0.32);"></div>
<div class="a t" style="left:160px;top:446px;font-size:10.5px;color:#e0e0e0;width:25px;text-align:center;letter-spacing:-0.3px">50</div>
<div class="a" style="left:186px;top:429px;width:24px;height:30px;background:#3c3c3c;"></div>
<svg class="a" style="left:185px;top:428px;" width="25" height="25" viewBox="0 0 25 25"><circle cx="12.5" cy="11" r="9.5" fill="#fafafa"/></svg>
<div class="a" style="left:186px;top:445px;width:24px;height:13px;background:rgba(60,60,60,0.32);"></div>
<div class="a t" style="left:185px;top:446px;font-size:10.5px;color:#e0e0e0;width:25px;text-align:center;letter-spacing:-0.3px">60</div>
<div class="a" style="left:36px;top:460px;width:24px;height:30px;background:#3c3c3c;"></div>
<svg class="a" style="left:35px;top:459px;" width="25" height="25" viewBox="0 0 25 25"><circle cx="12.5" cy="11" r="9.5" fill="#fafafa"/></svg>
<div class="a" style="left:36px;top:476px;width:24px;height:13px;background:rgba(60,60,60,0.32);"></div>
<div class="a t" style="left:35px;top:477px;font-size:10.5px;color:#e0e0e0;width:25px;text-align:center;letter-spacing:-0.3px">70</div>
<div class="a" style="left:61px;top:460px;width:24px;height:30px;background:#3c3c3c;"></div>
<svg class="a" style="left:60px;top:459px;" width="25" height="25" viewBox="0 0 25 25"><circle cx="12.5" cy="11" r="9.5" fill="#fafafa"/></svg>
<div class="a" style="left:61px;top:476px;width:24px;height:13px;background:rgba(60,60,60,0.32);"></div>
<div class="a t" style="left:60px;top:477px;font-size:10.5px;color:#e0e0e0;width:25px;text-align:center;letter-spacing:-0.3px">80</div>
<div class="a" style="left:86px;top:460px;width:24px;height:30px;background:#3c3c3c;"></div>
<svg class="a" style="left:85px;top:459px;" width="25" height="25" viewBox="0 0 25 25"><circle cx="12.5" cy="11" r="9.5" fill="#fafafa"/></svg>
<div class="a" style="left:86px;top:476px;width:24px;height:13px;background:rgba(60,60,60,0.32);"></div>
<div class="a t" style="left:85px;top:477px;font-size:10.5px;color:#e0e0e0;width:25px;text-align:center;letter-spacing:-0.3px">100</div>
<div class="a" style="left:111px;top:460px;width:24px;height:30px;background:#3c3c3c;"></div>
<svg class="a" style="left:110px;top:459px;" width="25" height="25" viewBox="0 0 25 25"><circle cx="12.5" cy="11" r="9.5" fill="#fafafa"/></svg>
<div class="a" style="left:111px;top:476px;width:24px;height:13px;background:rgba(60,60,60,0.32);"></div>
<div class="a t" style="left:110px;top:477px;font-size:10.5px;color:#e0e0e0;width:25px;text-align:center;letter-spacing:-0.3px">120</div>
<div class="a" style="left:136px;top:460px;width:24px;height:30px;background:#3c3c3c;"></div>
<svg class="a" style="left:135px;top:459px;" width="25" height="25" viewBox="0 0 25 25"><circle cx="12.5" cy="11" r="9.5" fill="#fafafa"/></svg>
<div class="a" style="left:136px;top:476px;width:24px;height:13px;background:rgba(60,60,60,0.32);"></div>
<div class="a t" style="left:135px;top:477px;font-size:10.5px;color:#e0e0e0;width:25px;text-align:center;letter-spacing:-0.3px">150</div>
<div class="a" style="left:161px;top:460px;width:24px;height:30px;background:#3c3c3c;"></div>
<svg class="a" style="left:160px;top:459px;" width="25" height="25" viewBox="0 0 25 25"><circle cx="12.5" cy="11" r="9.5" fill="#fafafa"/></svg>
<div class="a" style="left:161px;top:476px;width:24px;height:13px;background:rgba(60,60,60,0.32);"></div>
<div class="a t" style="left:160px;top:477px;font-size:10.5px;color:#e0e0e0;width:25px;text-align:center;letter-spacing:-0.3px">170</div>
<div class="a" style="left:186px;top:460px;width:24px;height:30px;background:#3c3c3c;"></div>
<svg class="a" style="left:185px;top:459px;" width="25" height="25" viewBox="0 0 25 25"><circle cx="12.5" cy="11" r="9.5" fill="#fafafa"/></svg>
<div class="a" style="left:186px;top:476px;width:24px;height:13px;background:rgba(60,60,60,0.32);"></div>
<div class="a t" style="left:185px;top:477px;font-size:10.5px;color:#e0e0e0;width:25px;text-align:center;letter-spacing:-0.3px">200</div>
<div class="a" style="left:36px;top:492px;width:24px;height:30px;background:#3c3c3c;"></div>
<svg class="a" style="left:35px;top:491px;" width="25" height="25" viewBox="0 0 25 25"><circle cx="12.5" cy="11" r="9.5" fill="#fafafa"/></svg>
<div class="a" style="left:36px;top:508px;width:24px;height:13px;background:rgba(60,60,60,0.32);"></div>
<div class="a t" style="left:35px;top:509px;font-size:10.5px;color:#e0e0e0;width:25px;text-align:center;letter-spacing:-0.3px">250</div>
<div class="a" style="left:61px;top:492px;width:24px;height:30px;background:#3c3c3c;"></div>
<svg class="a" style="left:60px;top:491px;" width="25" height="25" viewBox="0 0 25 25"><circle cx="12.5" cy="11" r="9.5" fill="#fafafa"/></svg>
<div class="a" style="left:61px;top:508px;width:24px;height:13px;background:rgba(60,60,60,0.32);"></div>
<div class="a t" style="left:60px;top:509px;font-size:10.5px;color:#e0e0e0;width:25px;text-align:center;letter-spacing:-0.3px">300</div>
<div class="a" style="left:86px;top:492px;width:24px;height:30px;background:#3c3c3c;"></div>
<svg class="a" style="left:85px;top:491px;" width="25" height="25" viewBox="0 0 25 25"><circle cx="12.5" cy="11" r="9.5" fill="#fafafa"/></svg>
<div class="a" style="left:86px;top:508px;width:24px;height:13px;background:rgba(60,60,60,0.32);"></div>
<div class="a t" style="left:85px;top:509px;font-size:10.5px;color:#e0e0e0;width:25px;text-align:center;letter-spacing:-0.3px">400</div>
<div class="a" style="left:111px;top:492px;width:24px;height:30px;background:#3c3c3c;"></div>
<svg class="a" style="left:110px;top:491px;" width="25" height="25" viewBox="0 0 25 25"><circle cx="12.5" cy="11" r="9.5" fill="#fafafa"/></svg>
<div class="a" style="left:111px;top:508px;width:24px;height:13px;background:rgba(60,60,60,0.32);"></div>
<div class="a t" style="left:110px;top:509px;font-size:10.5px;color:#e0e0e0;width:25px;text-align:center;letter-spacing:-0.3px">500</div>
<div class="a" style="left:136px;top:492px;width:24px;height:30px;background:#3c3c3c;"></div>
<svg class="a" style="left:135px;top:491px;" width="25" height="25" viewBox="0 0 25 25"><circle cx="12.5" cy="11" r="9.5" fill="#fafafa"/></svg>
<div class="a" style="left:136px;top:508px;width:24px;height:13px;background:rgba(60,60,60,0.32);"></div>
<div class="a t" style="left:135px;top:509px;font-size:10.5px;color:#e0e0e0;width:25px;text-align:center;letter-spacing:-0.3px">600</div>
<div class="a" style="left:161px;top:492px;width:24px;height:30px;background:#3c3c3c;"></div>
<svg class="a" style="left:160px;top:491px;" width="25" height="25" viewBox="0 0 25 25"><circle cx="12.5" cy="11" r="9.5" fill="#fafafa"/></svg>
<div class="a" style="left:161px;top:508px;width:24px;height:13px;background:rgba(60,60,60,0.32);"></div>
<div class="a t" style="left:160px;top:509px;font-size:10.5px;color:#e0e0e0;width:25px;text-align:center;letter-spacing:-0.3px">700</div>
<div class="a" style="left:186px;top:492px;width:24px;height:30px;background:#3c3c3c;"></div>
<svg class="a" style="left:185px;top:491px;" width="25" height="25" viewBox="0 0 25 25"><circle cx="12.5" cy="11" r="9.5" fill="#fafafa"/></svg>
<div class="a" style="left:186px;top:508px;width:24px;height:13px;background:rgba(60,60,60,0.32);"></div>
<div class="a t" style="left:185px;top:509px;font-size:10.5px;color:#e0e0e0;width:25px;text-align:center;letter-spacing:-0.3px">800</div>
<div class="a" style="left:36px;top:523px;width:24px;height:31px;background:#3c3c3c;"></div>
<svg class="a" style="left:35px;top:522px;" width="25" height="25" viewBox="0 0 25 25"><circle cx="12.5" cy="11" r="9.5" fill="#fafafa"/></svg>
<div class="a" style="left:36px;top:539px;width:24px;height:14px;background:rgba(60,60,60,0.32);"></div>
<div class="a t" style="left:35px;top:540px;font-size:10.5px;color:#e0e0e0;width:25px;text-align:center;letter-spacing:-0.8px">1000</div>
<div class="a" style="left:61px;top:523px;width:24px;height:31px;background:#3c3c3c;"></div>
<svg class="a" style="left:60px;top:522px;" width="25" height="25" viewBox="0 0 25 25"><circle cx="12.5" cy="11" r="9.5" fill="#fafafa"/></svg>
<div class="a" style="left:61px;top:539px;width:24px;height:14px;background:rgba(60,60,60,0.32);"></div>
<div class="a t" style="left:60px;top:540px;font-size:10.5px;color:#e0e0e0;width:25px;text-align:center;letter-spacing:-0.8px">1200</div>
<div class="a" style="left:86px;top:523px;width:24px;height:31px;background:#3c3c3c;"></div>
<svg class="a" style="left:85px;top:522px;" width="25" height="25" viewBox="0 0 25 25"><circle cx="12.5" cy="11" r="9.5" fill="#fafafa"/></svg>
<div class="a" style="left:86px;top:539px;width:24px;height:14px;background:rgba(60,60,60,0.32);"></div>
<div class="a t" style="left:85px;top:540px;font-size:10.5px;color:#e0e0e0;width:25px;text-align:center;letter-spacing:-0.8px">1500</div>
<div class="a" style="left:111px;top:523px;width:24px;height:31px;background:#3c3c3c;"></div>
<svg class="a" style="left:110px;top:522px;" width="25" height="25" viewBox="0 0 25 25"><circle cx="12.5" cy="11" r="9.5" fill="#fafafa"/></svg>
<div class="a" style="left:111px;top:539px;width:24px;height:14px;background:rgba(60,60,60,0.32);"></div>
<div class="a t" style="left:110px;top:540px;font-size:10.5px;color:#e0e0e0;width:25px;text-align:center;letter-spacing:-0.8px">1700</div>
<div class="a" style="left:136px;top:523px;width:24px;height:31px;background:#3c3c3c;"></div>
<svg class="a" style="left:135px;top:522px;" width="25" height="25" viewBox="0 0 25 25"><circle cx="12.5" cy="11" r="9.5" fill="#fafafa"/></svg>
<div class="a" style="left:136px;top:539px;width:24px;height:14px;background:rgba(60,60,60,0.32);"></div>
<div class="a t" style="left:135px;top:540px;font-size:10.5px;color:#e0e0e0;width:25px;text-align:center;letter-spacing:-0.8px">2000</div>
<div class="a" style="left:160px;top:522px;width:50px;height:32px;background:#474747;"></div>
<div class="a" style="left:209px;top:366px;width:11px;height:204px;background:#474747;"></div>
<div class="a" style="left:35px;top:570px;width:185px;height:3px;background:#333;"></div>
<div class="a" style="left:35px;top:573px;width:185px;height:147px;background:#494949;"></div>
<div class="a" style="left:35px;top:573px;width:185px;height:14px;background:#3a3a3a;"></div>
<div class="a" style="left:37px;top:575px;width:10px;height:11px;background:#343434;"></div>
<svg class="a" style="left:38px;top:577px;" width="8" height="7" viewBox="0 0 8 7"><path d="M1,1H7M1,3.5H7M1,6H7" stroke="#888" stroke-width="0.9"/></svg>
<div class="a" style="left:49px;top:574px;width:34px;height:13px;background:#474747;"></div>
<svg class="a" style="left:53px;top:575px;" width="12" height="12" viewBox="0 0 12 12"><circle cx="6" cy="6" r="5" stroke="#bbb" stroke-width="1.2" fill="none"/><circle cx="6" cy="6" r="2.8" fill="#bbb"/></svg>
<div class="a t" style="left:71px;top:577px;font-size:9px;color:#999;">c</div>
<div class="a" style="left:84px;top:574px;width:21px;height:13px;background:#4a4a4a;"></div>
<svg class="a" style="left:87.5px;top:575px;" width="14" height="12" viewBox="0 0 14 12"><path d="M1,11 L5,3 L7,6 L9,2 L13,11Z" fill="#8c8c8c"/></svg>
<div class="a" style="left:107px;top:574px;width:21px;height:13px;background:#4a4a4a;"></div>
<svg class="a" style="left:110.5px;top:575px;" width="14" height="12" viewBox="0 0 14 12"><path d="M1,2H13M1,6H13M1,10H13" stroke="#8c8c8c" stroke-width="1.2"/><rect x="3" y="0.5" width="3" height="3" fill="#8c8c8c"/><rect x="8" y="4.5" width="3" height="3" fill="#8c8c8c"/></svg>
<div class="a" style="left:130px;top:574px;width:21px;height:13px;background:#4a4a4a;"></div>
<svg class="a" style="left:133.5px;top:575px;" width="14" height="12" viewBox="0 0 14 12"><rect x="1" y="1" width="12" height="10" fill="#8c8c8c"/><path d="M1,5H13M5,1V11" stroke="#474747"/></svg>
<div class="a" style="left:153px;top:574px;width:21px;height:13px;background:#4a4a4a;"></div>
<svg class="a" style="left:156.5px;top:575px;" width="14" height="12" viewBox="0 0 14 12"><circle cx="4" cy="3" r="2" stroke="#8c8c8c" fill="none"/><circle cx="10" cy="3" r="2" stroke="#8c8c8c" fill="none"/><rect x="1" y="7" width="12" height="4" fill="#8c8c8c"/></svg>
<div class="a" style="left:176px;top:574px;width:21px;height:13px;background:#4a4a4a;"></div>
<svg class="a" style="left:179.5px;top:575px;" width="14" height="12" viewBox="0 0 14 12"><path d="M2,1H12V11H2Z M4,3H10 M4,6H10 M4,9H10" stroke="#8c8c8c" fill="none"/></svg>
<div class="a" style="left:199px;top:574px;width:21px;height:13px;background:#4a4a4a;"></div>
<svg class="a" style="left:202.5px;top:575px;" width="14" height="12" viewBox="0 0 14 12"><rect x="1" y="1" width="12" height="10" fill="#8c8c8c"/><path d="M1,4H13" stroke="#474747"/></svg>
<div class="a" style="left:62.5px;top:590px;width:130px;height:130px;border-radius:50%;background:conic-gradient(from 0deg,hsl(60,100%,50%),hsl(120,100%,50%) 60deg,hsl(180,100%,50%) 120deg,hsl(240,100%,50%) 180deg,hsl(300,100%,50%) 240deg,hsl(360,100%,50%) 300deg,hsl(60,100%,50%) 360deg);-webkit-mask:radial-gradient(circle,transparent 53.5px,#000 54.5px);mask:radial-gradient(circle,transparent 53.5px,#000 54.5px)"></div>
<div class="a" style="left:93.5px;top:621.5px;width:69px;height:69px;background:linear-gradient(to bottom,rgba(0,0,0,0),#000),linear-gradient(to right,#fff,#6a10ff)"></div>
<svg class="a" style="left:126px;top:629px;" width="9" height="9" viewBox="0 0 9 9"><circle cx="4.5" cy="4.5" r="3.4" stroke="#ddd" stroke-width="1.2" fill="none"/></svg>
<svg class="a" style="left:95px;top:702px;" width="12" height="14" viewBox="0 0 12 14"><rect x="3" y="2" width="6" height="10" transform="rotate(28 6 7)" stroke="#fff" stroke-width="1.6" fill="none"/></svg>
<div class="a" style="left:47px;top:699px;width:19px;height:19px;background:#ffffff;border:1px solid #999"></div>
<div class="a" style="left:35px;top:689px;width:21px;height:21px;background:#8b55d2;border:2px solid #c7b2ea;border-radius:2px"></div>
<div class="a" style="left:220px;top:17px;width:2px;height:703px;background:#3a3a3a;"></div>
<div class="a" style="left:222px;top:0px;width:856px;height:20px;background:#424242;"></div>
<div class="a" style="left:222px;top:19px;width:856px;height:1px;background:#383838;"></div>
<svg class="a" style="left:224px;top:2px;" width="16" height="16" viewBox="0 0 16 16"><rect x="0.5" y="0.5" width="15" height="15" stroke="#c8c8c8" fill="none"/><ellipse cx="8" cy="8" rx="5.5" ry="4.5" stroke="#c8c8c8" stroke-width="1.2" fill="none"/><ellipse cx="8" cy="8" rx="3" ry="2.2" stroke="#c8c8c8" stroke-width="1.1" fill="none"/></svg>
<div class="a" style="left:246px;top:3px;width:1px;height:14px;background:#555;"></div>
<div class="a" style="left:317px;top:3px;width:1px;height:14px;background:#555;"></div>
<div class="a" style="left:361px;top:3px;width:1px;height:14px;background:#555;"></div>
<div class="a" style="left:444px;top:3px;width:1px;height:14px;background:#555;"></div>
<div class="a" style="left:507px;top:3px;width:1px;height:14px;background:#555;"></div>
<div class="a" style="left:571px;top:3px;width:1px;height:14px;background:#555;"></div>
<div class="a" style="left:594px;top:3px;width:1px;height:14px;background:#555;"></div>
<svg class="a" style="left:251px;top:2px;" width="16" height="16" viewBox="0 0 16 16"><path d="M2,1 H9 L12,4 V10 M2,1 V14 H8" stroke="#c8c8c8" stroke-width="1.3" fill="none"/><circle cx="12" cy="12" r="3.5" fill="#c8c8c8"/><path d="M10,12H14M12,10V14" stroke="#424242" stroke-width="1.2"/></svg>
<svg class="a" style="left:268px;top:2px;" width="16" height="16" viewBox="0 0 16 16"><path d="M1,4 H6 L7,6 H14 V14 H1Z" fill="#c8c8c8"/><path d="M3,8 H15 L13,14 H1Z" fill="#e0e0e0" stroke="#424242" stroke-width="0.6"/></svg>
<svg class="a" style="left:286px;top:2px;" width="16" height="16" viewBox="0 0 16 16"><path d="M8,1 V8 M5,5 L8,8 L11,5" stroke="#c8c8c8" stroke-width="1.3" fill="none"/><path d="M1,14 Q1,7 8,7 Q15,7 15,14Z" stroke="#c8c8c8" stroke-width="1.2" fill="none"/><rect x="1" y="12" width="14" height="3" fill="#c8c8c8"/></svg>
<svg class="a" style="left:304px;top:2px;" width="10" height="16" viewBox="0 0 10 16"><path d="M2,7 L5,10 L8,7" stroke="#c8c8c8" stroke-width="1.1" fill="none"/></svg>
<svg class="a" style="left:322px;top:2px;" width="16" height="16" viewBox="0 0 16 16"><path d="M3,6 H10 Q14,6 14,10 Q14,14 10,14 H4" stroke="#c8c8c8" stroke-width="1.5" fill="none"/><path d="M1,6 L5,2.5 V9.5Z" fill="#c8c8c8"/></svg>
<svg class="a" style="left:341px;top:2px;" width="16" height="16" viewBox="0 0 16 16"><path d="M13,6 H6 Q2,6 2,10 Q2,14 6,14 H12" stroke="#5c5c5c" stroke-width="1.5" fill="none"/><path d="M15,6 L11,2.5 V9.5Z" fill="#5c5c5c"/></svg>
<svg class="a" style="left:366px;top:2px;" width="16" height="16" viewBox="0 0 16 16"><path d="M8,1 V4" stroke="#c8c8c8" stroke-width="1.5" transform="rotate(0 8 8)"/><path d="M8,1 V4" stroke="#c8c8c8" stroke-width="1.5" transform="rotate(30 8 8)"/><path d="M8,1 V4" stroke="#c8c8c8" stroke-width="1.5" transform="rotate(60 8 8)"/><path d="M8,1 V4" stroke="#c8c8c8" stroke-width="1.5" transform="rotate(90 8 8)"/><path d="M8,1 V4" stroke="#c8c8c8" stroke-width="1.5" transform="rotate(120 8 8)"/><path d="M8,1 V4" stroke="#c8c8c8" stroke-width="1.5" transform="rotate(150 8 8)"/><path d="M8,1 V4" stroke="#c8c8c8" stroke-width="1.5" transform="rotate(180 8 8)"/><path d="M8,1 V4" stroke="#c8c8c8" stroke-width="1.5" transform="rotate(210 8 8)"/><path d="M8,1 V4" stroke="#c8c8c8" stroke-width="1.5" transform="rotate(240 8 8)"/><path d="M8,1 V4" stroke="#c8c8c8" stroke-width="1.5" transform="rotate(270 8 8)"/><path d="M8,1 V4" stroke="#c8c8c8" stroke-width="1.5" transform="rotate(300 8 8)"/><path d="M8,1 V4" stroke="#c8c8c8" stroke-width="1.5" transform="rotate(330 8 8)"/></svg>
<svg class="a" style="left:388px;top:2px;" width="16" height="16" viewBox="0 0 16 16"><rect x="3" y="3" width="10" height="10" stroke="#5c5c5c" stroke-width="1.3" fill="none"/><path d="M3,8H13M8,3V13" stroke="#5c5c5c"/></svg>
<svg class="a" style="left:404px;top:2px;" width="16" height="16" viewBox="0 0 16 16"><path d="M1,7 L7,1 L14,8 L8,14Z" fill="#c8c8c8"/><path d="M4,7 L7,4 L11,8Z" fill="#424242"/><path d="M14,10 Q16,13 14,14 Q12,13 14,10Z" fill="#c8c8c8"/></svg>
<svg class="a" style="left:423px;top:2px;" width="16" height="16" viewBox="0 0 16 16"><rect x="2.5" y="3.5" width="11" height="10" stroke="#c8c8c8" stroke-width="1.2" fill="none" stroke-dasharray="2 1"/><path d="M8,0 V3" stroke="#c8c8c8" stroke-width="1.2"/></svg>
<svg class="a" style="left:449px;top:2px;" width="16" height="16" viewBox="0 0 16 16"><rect x="1" y="1" width="13" height="13" stroke="#5c5c5c" fill="none"/><path d="M1,1 L14,14" stroke="#5c5c5c"/></svg>
<svg class="a" style="left:468px;top:2px;" width="16" height="16" viewBox="0 0 16 16"><rect x="1" y="1" width="13" height="13" stroke="#5c5c5c" fill="none"/><path d="M14,1 L1,14 H14Z" fill="#5c5c5c"/></svg>
<svg class="a" style="left:487px;top:2px;" width="16" height="16" viewBox="0 0 16 16"><rect x="1" y="1" width="13" height="13" rx="2" stroke="#5c5c5c" stroke-width="1.5" fill="none"/></svg>
<svg class="a" style="left:511px;top:2px;" width="16" height="16" viewBox="0 0 16 16"><path d="M1,3 V15 H14" stroke="#c8c8c8" stroke-width="1.3" fill="none"/><path d="M4,12 L15,2" stroke="#c8c8c8" stroke-width="1.4"/><path d="M1,8 L5,12" stroke="#c8c8c8" stroke-width="1.2"/></svg>
<div class="a" style="left:528px;top:0px;width:19px;height:19px;background:#666d8b;"></div>
<svg class="a" style="left:530px;top:2px;" width="16" height="16" viewBox="0 0 16 16"><path d="M14,1 L7,9 Q4,9 3,12 Q3,15 8,15 Q11,14 11,11 L15,3" stroke="#d5d8e6" stroke-width="1.3" fill="none"/></svg>
<svg class="a" style="left:551px;top:2px;" width="16" height="16" viewBox="0 0 16 16"><path d="M2,8 V14 H15" stroke="#c8c8c8" stroke-width="1.3" fill="none"/><path d="M4,12 L15,2" stroke="#c8c8c8" stroke-width="1.5"/><path d="M3,10 H9" stroke="#c8c8c8" stroke-width="1"/></svg>
<svg class="a" style="left:575px;top:2px;" width="16" height="16" viewBox="0 0 16 16"><rect x="2" y="1" width="11" height="14" stroke="#c8c8c8" stroke-width="1.3" fill="none"/><path d="M5,4 H9 M5,4 V10 H9 M5,7 H8" stroke="#c8c8c8" stroke-width="1"/><rect x="2" y="13" width="11" height="2" fill="#c8c8c8"/></svg>
<svg class="a" style="left:600px;top:2px;" width="16" height="16" viewBox="0 0 16 16"><circle cx="8" cy="8" r="6" stroke="#c8c8c8" stroke-width="1.3" fill="none"/><path d="M3,12 L1,15 L5,13.5" fill="#c8c8c8"/><text x="5.3" y="11.5" font-size="9" fill="#c8c8c8" font-family="Liberation Sans" font-weight="bold">?</text><circle cx="14" cy="2" r="1" fill="#c8c8c8"/></svg>
<div class="a" style="left:222px;top:20px;width:746px;height:17px;background:#313131;"></div>
<div class="a" style="left:222px;top:21px;width:78px;height:16px;background:#676e8c;"></div>
<div class="a t" style="left:225px;top:24px;font-size:9px;color:#c9cde0;letter-spacing:-0.1px">Ilustración*</div>
<svg class="a" style="left:289px;top:25px;" width="8" height="8" viewBox="0 0 8 8"><circle cx="4" cy="4" r="2.2" fill="#c5cbe3"/></svg>
<svg class="a" style="left:959px;top:24px;" width="8" height="8" viewBox="0 0 8 8"><path d="M1.5,2.5 L4,5 L6.5,2.5" stroke="#bbb" stroke-width="1.3" fill="none"/></svg>
<div class="a" style="left:234px;top:37px;width:725px;height:13px;background:#535353;"></div>
<div class="a" style="left:234px;top:48px;width:725px;height:1.5px;background:#dcdcdc;"></div>
<svg class="a" style="left:234px;top:37px;overflow:hidden" width="725" height="13" viewBox="0 0 725 13"><path d="M1.1,9.5 V12 M6.7,9.5 V12 M12.4,8 V12 M18.0,9.5 V12 M23.6,9.5 V12 M29.3,9.5 V12 M34.9,1 V12 M40.5,9.5 V12 M46.2,9.5 V12 M51.8,9.5 V12 M57.4,8 V12 M63.1,9.5 V12 M68.7,9.5 V12 M74.4,9.5 V12 M80.0,1 V12 M85.6,9.5 V12 M91.3,9.5 V12 M96.9,9.5 V12 M102.6,8 V12 M108.2,9.5 V12 M113.8,9.5 V12 M119.5,9.5 V12 M125.1,1 V12 M130.7,9.5 V12 M136.4,9.5 V12 M142.0,9.5 V12 M147.7,8 V12 M153.3,9.5 V12 M158.9,9.5 V12 M164.6,9.5 V12 M170.2,1 V12 M175.8,9.5 V12 M181.5,9.5 V12 M187.1,9.5 V12 M192.8,8 V12 M198.4,9.5 V12 M204.0,9.5 V12 M209.7,9.5 V12 M215.3,1 V12 M220.9,9.5 V12 M226.6,9.5 V12 M232.2,9.5 V12 M237.9,8 V12 M243.5,9.5 V12 M249.1,9.5 V12 M254.8,9.5 V12 M260.4,1 V12 M266.0,9.5 V12 M271.7,9.5 V12 M277.3,9.5 V12 M282.9,8 V12 M288.6,9.5 V12 M294.2,9.5 V12 M299.9,9.5 V12 M305.5,1 V12 M311.1,9.5 V12 M316.8,9.5 V12 M322.4,9.5 V12 M328.0,8 V12 M333.7,9.5 V12 M339.3,9.5 V12 M345.0,9.5 V12 M350.6,1 V12 M356.2,9.5 V12 M361.9,9.5 V12 M367.5,9.5 V12 M373.1,8 V12 M378.8,9.5 V12 M384.4,9.5 V12 M390.1,9.5 V12 M395.7,1 V12 M401.3,9.5 V12 M407.0,9.5 V12 M412.6,9.5 V12 M418.2,8 V12 M423.9,9.5 V12 M429.5,9.5 V12 M435.2,9.5 V12 M440.8,1 V12 M446.4,9.5 V12 M452.1,9.5 V12 M457.7,9.5 V12 M463.3,8 V12 M469.0,9.5 V12 M474.6,9.5 V12 M480.3,9.5 V12 M485.9,1 V12 M491.5,9.5 V12 M497.2,9.5 V12 M502.8,9.5 V12 M508.5,8 V12 M514.1,9.5 V12 M519.7,9.5 V12 M525.4,9.5 V12 M531.0,1 V12 M536.6,9.5 V12 M542.3,9.5 V12 M547.9,9.5 V12 M553.5,8 V12 M559.2,9.5 V12 M564.8,9.5 V12 M570.5,9.5 V12 M576.1,1 V12 M581.7,9.5 V12 M587.4,9.5 V12 M593.0,9.5 V12 M598.6,8 V12 M604.3,9.5 V12 M609.9,9.5 V12 M615.6,9.5 V12 M621.2,1 V12 M626.8,9.5 V12 M632.5,9.5 V12 M638.1,9.5 V12 M643.8,8 V12 M649.4,9.5 V12 M655.0,9.5 V12 M660.7,9.5 V12 M666.3,1 V12 M671.9,9.5 V12 M677.6,9.5 V12 M683.2,9.5 V12 M688.9,8 V12 M694.5,9.5 V12 M700.1,9.5 V12 M705.8,9.5 V12 M711.4,1 V12 M717.0,9.5 V12 M722.7,9.5 V12 " stroke="#dcdcdc" stroke-width="1" fill="none"/><text x="36.9" y="10" font-size="10" fill="#dcdcdc" font-family="Liberation Sans" textLength="11.2" lengthAdjust="spacingAndGlyphs">80</text><text x="82.0" y="10" font-size="10" fill="#dcdcdc" font-family="Liberation Sans" textLength="5.6" lengthAdjust="spacingAndGlyphs">0</text><text x="127.1" y="10" font-size="10" fill="#dcdcdc" font-family="Liberation Sans" textLength="11.2" lengthAdjust="spacingAndGlyphs">80</text><text x="172.2" y="10" font-size="10" fill="#dcdcdc" font-family="Liberation Sans" textLength="16.8" lengthAdjust="spacingAndGlyphs">160</text><text x="217.3" y="10" font-size="10" fill="#dcdcdc" font-family="Liberation Sans" textLength="16.8" lengthAdjust="spacingAndGlyphs">240</text><text x="262.4" y="10" font-size="10" fill="#dcdcdc" font-family="Liberation Sans" textLength="16.8" lengthAdjust="spacingAndGlyphs">320</text><text x="307.5" y="10" font-size="10" fill="#dcdcdc" font-family="Liberation Sans" textLength="16.8" lengthAdjust="spacingAndGlyphs">400</text><text x="352.6" y="10" font-size="10" fill="#dcdcdc" font-family="Liberation Sans" textLength="16.8" lengthAdjust="spacingAndGlyphs">480</text><text x="397.7" y="10" font-size="10" fill="#dcdcdc" font-family="Liberation Sans" textLength="16.8" lengthAdjust="spacingAndGlyphs">560</text><text x="442.8" y="10" font-size="10" fill="#dcdcdc" font-family="Liberation Sans" textLength="16.8" lengthAdjust="spacingAndGlyphs">640</text><text x="487.9" y="10" font-size="10" fill="#dcdcdc" font-family="Liberation Sans" textLength="16.8" lengthAdjust="spacingAndGlyphs">720</text><text x="533.0" y="10" font-size="10" fill="#dcdcdc" font-family="Liberation Sans" textLength="16.8" lengthAdjust="spacingAndGlyphs">800</text><text x="578.1" y="10" font-size="10" fill="#dcdcdc" font-family="Liberation Sans" textLength="16.8" lengthAdjust="spacingAndGlyphs">880</text><text x="623.2" y="10" font-size="10" fill="#dcdcdc" font-family="Liberation Sans" textLength="16.8" lengthAdjust="spacingAndGlyphs">960</text><text x="668.3" y="10" font-size="10" fill="#dcdcdc" font-family="Liberation Sans" textLength="22.4" lengthAdjust="spacingAndGlyphs">1040</text><text x="713.4" y="10" font-size="10" fill="#dcdcdc" font-family="Liberation Sans" textLength="22.4" lengthAdjust="spacingAndGlyphs">1120</text></svg>
<div class="a" style="left:222px;top:37px;width:12px;height:13px;background:#535353;"></div>
<div class="a" style="left:222px;top:50px;width:12px;height:662px;background:#535353;"></div>
<div class="a" style="left:232.5px;top:50px;width:1.5px;height:662px;background:#dcdcdc;"></div>
<svg class="a" style="left:222px;top:50px;overflow:hidden" width="12" height="662" viewBox="0 0 12 662"><path d="M1,4.9 H12 M9.5,10.5 H12 M9.5,16.2 H12 M9.5,21.8 H12 M8,27.5 H12 M9.5,33.1 H12 M9.5,38.7 H12 M9.5,44.4 H12 M1,50.0 H12 M9.5,55.6 H12 M9.5,61.3 H12 M9.5,66.9 H12 M8,72.5 H12 M9.5,78.2 H12 M9.5,83.8 H12 M9.5,89.5 H12 M1,95.1 H12 M9.5,100.7 H12 M9.5,106.4 H12 M9.5,112.0 H12 M8,117.7 H12 M9.5,123.3 H12 M9.5,128.9 H12 M9.5,134.6 H12 M1,140.2 H12 M9.5,145.8 H12 M9.5,151.5 H12 M9.5,157.1 H12 M8,162.8 H12 M9.5,168.4 H12 M9.5,174.0 H12 M9.5,179.7 H12 M1,185.3 H12 M9.5,190.9 H12 M9.5,196.6 H12 M9.5,202.2 H12 M8,207.9 H12 M9.5,213.5 H12 M9.5,219.1 H12 M9.5,224.8 H12 M1,230.4 H12 M9.5,236.0 H12 M9.5,241.7 H12 M9.5,247.3 H12 M8,252.9 H12 M9.5,258.6 H12 M9.5,264.2 H12 M9.5,269.9 H12 M1,275.5 H12 M9.5,281.1 H12 M9.5,286.8 H12 M9.5,292.4 H12 M8,298.1 H12 M9.5,303.7 H12 M9.5,309.3 H12 M9.5,315.0 H12 M1,320.6 H12 M9.5,326.2 H12 M9.5,331.9 H12 M9.5,337.5 H12 M8,343.2 H12 M9.5,348.8 H12 M9.5,354.4 H12 M9.5,360.1 H12 M1,365.7 H12 M9.5,371.3 H12 M9.5,377.0 H12 M9.5,382.6 H12 M8,388.2 H12 M9.5,393.9 H12 M9.5,399.5 H12 M9.5,405.2 H12 M1,410.8 H12 M9.5,416.4 H12 M9.5,422.1 H12 M9.5,427.7 H12 M8,433.4 H12 M9.5,439.0 H12 M9.5,444.6 H12 M9.5,450.3 H12 M1,455.9 H12 M9.5,461.5 H12 M9.5,467.2 H12 M9.5,472.8 H12 M8,478.5 H12 M9.5,484.1 H12 M9.5,489.7 H12 M9.5,495.4 H12 M1,501.0 H12 M9.5,506.6 H12 M9.5,512.3 H12 M9.5,517.9 H12 M8,523.5 H12 M9.5,529.2 H12 M9.5,534.8 H12 M9.5,540.5 H12 M1,546.1 H12 M9.5,551.7 H12 M9.5,557.4 H12 M9.5,563.0 H12 M8,568.6 H12 M9.5,574.3 H12 M9.5,579.9 H12 M9.5,585.6 H12 M1,591.2 H12 M9.5,596.8 H12 M9.5,602.5 H12 M9.5,608.1 H12 M8,613.8 H12 M9.5,619.4 H12 M9.5,625.0 H12 M9.5,630.7 H12 M1,636.3 H12 M9.5,641.9 H12 M9.5,647.6 H12 M9.5,653.2 H12 M8,658.9 H12 " stroke="#dcdcdc" stroke-width="1" fill="none"/><text x="0" y="0" transform="translate(9.5,18.1) rotate(-90)" font-size="10" fill="#dcdcdc" font-family="Liberation Sans" textLength="11.2" lengthAdjust="spacingAndGlyphs">80</text><text x="0" y="0" transform="translate(9.5,57.6) rotate(-90)" font-size="10" fill="#dcdcdc" font-family="Liberation Sans" textLength="5.6" lengthAdjust="spacingAndGlyphs">0</text><text x="0" y="0" transform="translate(9.5,108.3) rotate(-90)" font-size="10" fill="#dcdcdc" font-family="Liberation Sans" textLength="11.2" lengthAdjust="spacingAndGlyphs">80</text><text x="0" y="0" transform="translate(9.5,159.0) rotate(-90)" font-size="10" fill="#dcdcdc" font-family="Liberation Sans" textLength="16.8" lengthAdjust="spacingAndGlyphs">160</text><text x="0" y="0" transform="translate(9.5,204.1) rotate(-90)" font-size="10" fill="#dcdcdc" font-family="Liberation Sans" textLength="16.8" lengthAdjust="spacingAndGlyphs">240</text><text x="0" y="0" transform="translate(9.5,249.2) rotate(-90)" font-size="10" fill="#dcdcdc" font-family="Liberation Sans" textLength="16.8" lengthAdjust="spacingAndGlyphs">320</text><text x="0" y="0" transform="translate(9.5,294.3) rotate(-90)" font-size="10" fill="#dcdcdc" font-family="Liberation Sans" textLength="16.8" lengthAdjust="spacingAndGlyphs">400</text><text x="0" y="0" transform="translate(9.5,339.4) rotate(-90)" font-size="10" fill="#dcdcdc" font-family="Liberation Sans" textLength="16.8" lengthAdjust="spacingAndGlyphs">480</text><text x="0" y="0" transform="translate(9.5,384.5) rotate(-90)" font-size="10" fill="#dcdcdc" font-family="Liberation Sans" textLength="16.8" lengthAdjust="spacingAndGlyphs">560</text><text x="0" y="0" transform="translate(9.5,429.6) rotate(-90)" font-size="10" fill="#dcdcdc" font-family="Liberation Sans" textLength="16.8" lengthAdjust="spacingAndGlyphs">640</text><text x="0" y="0" transform="translate(9.5,474.7) rotate(-90)" font-size="10" fill="#dcdcdc" font-family="Liberation Sans" textLength="16.8" lengthAdjust="spacingAndGlyphs">720</text><text x="0" y="0" transform="translate(9.5,519.8) rotate(-90)" font-size="10" fill="#dcdcdc" font-family="Liberation Sans" textLength="16.8" lengthAdjust="spacingAndGlyphs">800</text><text x="0" y="0" transform="translate(9.5,564.9) rotate(-90)" font-size="10" fill="#dcdcdc" font-family="Liberation Sans" textLength="16.8" lengthAdjust="spacingAndGlyphs">880</text><text x="0" y="0" transform="translate(9.5,610.0) rotate(-90)" font-size="10" fill="#dcdcdc" font-family="Liberation Sans" textLength="16.8" lengthAdjust="spacingAndGlyphs">960</text><text x="0" y="0" transform="translate(9.5,660.7) rotate(-90)" font-size="10" fill="#dcdcdc" font-family="Liberation Sans" textLength="22.4" lengthAdjust="spacingAndGlyphs">1040</text></svg>
<div class="a" style="left:222px;top:37px;width:12px;height:1px;background:#3a3a3a;"></div>
<div class="a" style="left:577px;top:38px;width:1.5px;height:11px;background:#f4f4f4;"></div>
<div class="a" style="left:223px;top:272px;width:10px;height:1.5px;background:#f4f4f4;"></div>
<div class="a" style="left:232.5px;top:37px;width:1.5px;height:13px;background:#dcdcdc;"></div>
<div class="a" style="left:234px;top:49px;width:725px;height:663px;background:#2b2b2b;"></div>
<div class="a" style="left:314px;top:100px;width:564px;height:612px;background:#ffffff;"></div>
<svg class="a" style="left:314px;top:100px;overflow:hidden" width="564" height="612" viewBox="0 0 564 612"><g transform="translate(-314,-100)" filter="url(#sk)"><path d="M514,222 C516.3,217.7 521.2,203.7 528,196 C534.8,188.3 543.8,180.7 555,176 C566.2,171.3 582.5,168.7 595,168 C607.5,167.3 620.8,168.0 630,172 C639.2,176.0 645.0,183.2 650,192 C655.0,200.8 658.3,219.5 660,225" stroke="#9474d6" stroke-width="3.30" opacity="0.40" fill="none" stroke-linecap="round" stroke-linejoin="round"/><path d="M520,212 C524.2,208.7 535.0,197.3 545,192 C555.0,186.7 574.2,182.0 580,180" stroke="#9474d6" stroke-width="2.70" opacity="0.30" fill="none" stroke-linecap="round" stroke-linejoin="round"/><path d="M650,205 C651.7,210.8 658.0,229.2 660,240 C662.0,250.8 661.7,265.0 662,270" stroke="#9474d6" stroke-width="3.75" opacity="0.55" fill="none" stroke-linecap="round" stroke-linejoin="round"/><path d="M515,215 C514.7,220.8 512.5,236.7 513,250 C513.5,263.3 517.2,287.5 518,295" stroke="#9474d6" stroke-width="3.00" opacity="0.40" fill="none" stroke-linecap="round" stroke-linejoin="round"/><path d="M570,210 C569.7,215.8 568.8,231.7 568,245 C567.2,258.3 565.5,282.5 565,290" stroke="#9474d6" stroke-width="3.00" opacity="0.30" fill="none" stroke-linecap="round" stroke-linejoin="round"/><path d="M578,268 C578.3,264.3 578.3,252.7 580,246 C581.7,239.3 583.7,232.8 588,228 C592.3,223.2 600.3,218.0 606,217 C611.7,216.0 618.0,219.2 622,222 C626.0,224.8 628.7,229.8 630,234 C631.3,238.2 630.0,244.8 630,247" stroke="#9474d6" stroke-width="4.50" opacity="0.80" fill="none" stroke-linecap="round" stroke-linejoin="round"/><path d="M524,303 C528.3,299.3 540.7,287.5 550,281 C559.3,274.5 569.7,268.3 580,264 C590.3,259.7 601.3,256.2 612,255 C622.7,253.8 638.7,256.7 644,257" stroke="#9474d6" stroke-width="5.10" opacity="0.72" fill="none" stroke-linecap="round" stroke-linejoin="round"/><path d="M545,235 C546.2,233.3 549.5,227.5 552,225 C554.5,222.5 558.7,220.8 560,220" stroke="#9474d6" stroke-width="2.40" opacity="0.35" fill="none" stroke-linecap="round" stroke-linejoin="round"/><path d="M518,300 C518.7,303.7 519.2,314.8 522,322 C524.8,329.2 528.7,337.0 535,343 C541.3,349.0 550.8,354.8 560,358 C569.2,361.2 580.3,363.3 590,362 C599.7,360.7 609.7,356.2 618,350 C626.3,343.8 633.8,335.0 640,325 C646.2,315.0 651.3,300.5 655,290 C658.7,279.5 660.8,266.7 662,262" stroke="#9474d6" stroke-width="4.20" opacity="0.72" fill="none" stroke-linecap="round" stroke-linejoin="round"/><path d="M505,300 C506.7,305.8 509.2,324.7 515,335 C520.8,345.3 530.8,355.8 540,362 C549.2,368.2 565.0,370.3 570,372" stroke="#9474d6" stroke-width="2.40" opacity="0.22" fill="none" stroke-linecap="round" stroke-linejoin="round"/><path d="M665,280 L663,330" stroke="#9474d6" stroke-width="2.25" opacity="0.22" fill="none" stroke-linecap="round" stroke-linejoin="round"/><path d="M585,362 C585.2,363.8 585.5,369.2 586,373 C586.5,376.8 587.7,383.0 588,385" stroke="#9474d6" stroke-width="3.30" opacity="0.55" fill="none" stroke-linecap="round" stroke-linejoin="round"/><path d="M588,385 C590.2,385.5 596.8,388.7 601,388 C605.2,387.3 611.0,382.2 613,381" stroke="#9474d6" stroke-width="3.00" opacity="0.45" fill="none" stroke-linecap="round" stroke-linejoin="round"/><path d="M616,345 C616.3,348.0 618.5,357.0 618,363 C617.5,369.0 613.8,378.0 613,381" stroke="#9474d6" stroke-width="3.60" opacity="0.55" fill="none" stroke-linecap="round" stroke-linejoin="round"/><path d="M618,364 C621.7,363.0 632.7,359.3 640,358 C647.3,356.7 658.3,356.3 662,356" stroke="#9474d6" stroke-width="5.10" opacity="0.80" fill="none" stroke-linecap="round" stroke-linejoin="round"/><path d="M662,356 C669.7,362.7 691.3,381.8 708,396 C724.7,410.2 753.0,433.5 762,441" stroke="#9474d6" stroke-width="4.20" opacity="0.72" fill="none" stroke-linecap="round" stroke-linejoin="round"/><path d="M628,364 C631.3,365.0 641.8,367.8 648,370 C654.2,372.2 662.2,375.8 665,377" stroke="#9474d6" stroke-width="3.00" opacity="0.28" fill="none" stroke-linecap="round" stroke-linejoin="round"/><path d="M578,375 C575.0,376.8 564.3,380.7 560,386 C555.7,391.3 553.3,403.5 552,407" stroke="#9474d6" stroke-width="3.60" opacity="0.55" fill="none" stroke-linecap="round" stroke-linejoin="round"/><path d="M552,407 C550.5,412.2 547.7,427.8 543,438 C538.3,448.2 529.7,457.3 524,468 C518.3,478.7 514.7,489.2 509,502 C503.3,514.8 496.7,530.7 490,545 C483.3,559.3 472.5,580.8 469,588" stroke="#9474d6" stroke-width="3.90" opacity="0.68" fill="none" stroke-linecap="round" stroke-linejoin="round"/><path d="M576,395 C572.8,400.8 563.0,416.8 557,430 C551.0,443.2 545.7,459.3 540,474 C534.3,488.7 529.7,503.7 523,518 C516.3,532.3 507.7,547.2 500,560 C492.3,572.8 480.8,589.2 477,595" stroke="#9474d6" stroke-width="3.30" opacity="0.50" fill="none" stroke-linecap="round" stroke-linejoin="round"/><path d="M546,441 C545.5,444.5 541.0,456.5 543,462 C545.0,467.5 551.5,471.5 558,474 C564.5,476.5 578.0,476.5 582,477" stroke="#9474d6" stroke-width="3.00" opacity="0.45" fill="none" stroke-linecap="round" stroke-linejoin="round"/><path d="M573,471 C572.0,478.8 569.0,505.3 567,518 C565.0,530.7 563.2,538.0 561,547 C558.8,556.0 555.2,567.8 554,572" stroke="#9474d6" stroke-width="3.60" opacity="0.60" fill="none" stroke-linecap="round" stroke-linejoin="round"/><path d="M659,398 C658.5,403.0 658.0,419.3 656,428 C654.0,436.7 650.8,439.7 647,450 C643.2,460.3 635.3,483.3 633,490" stroke="#9474d6" stroke-width="3.90" opacity="0.68" fill="none" stroke-linecap="round" stroke-linejoin="round"/><path d="M659,402 C665.5,406.0 686.5,419.2 698,426 C709.5,432.8 723.0,440.2 728,443" stroke="#9474d6" stroke-width="3.60" opacity="0.62" fill="none" stroke-linecap="round" stroke-linejoin="round"/><path d="M728,443 C728.5,445.7 729.5,451.2 731,459 C732.5,466.8 736.0,484.8 737,490" stroke="#9474d6" stroke-width="3.90" opacity="0.68" fill="none" stroke-linecap="round" stroke-linejoin="round"/><path d="M731,445 C733.3,444.0 740.0,439.7 745,439 C750.0,438.3 757.5,439.7 761,441 C764.5,442.3 765.2,446.0 766,447" stroke="#9474d6" stroke-width="3.00" opacity="0.45" fill="none" stroke-linecap="round" stroke-linejoin="round"/><path d="M766,447 C766.2,450.8 767.3,461.2 767,470 C766.7,478.8 764.5,495.0 764,500" stroke="#9474d6" stroke-width="3.30" opacity="0.55" fill="none" stroke-linecap="round" stroke-linejoin="round"/><path d="M633,487 C637.5,490.3 650.0,499.8 660,507 C670.0,514.2 683.0,523.3 693,530 C703.0,536.7 711.0,537.0 720,547 C729.0,557.0 740.8,576.2 747,590 C753.2,603.8 752.3,616.7 757,630 C761.7,643.3 769.0,656.7 775,670 C781.0,683.3 788.0,697.5 793,710 C798.0,722.5 801.8,733.7 805,745 C808.2,756.3 810.8,772.5 812,778" stroke="#9474d6" stroke-width="3.60" opacity="0.60" fill="none" stroke-linecap="round" stroke-linejoin="round"/><path d="M726,487 C724.0,488.5 715.7,491.8 714,496 C712.3,500.2 714.0,506.3 716,512 C718.0,517.7 722.0,524.0 726,530 C730.0,536.0 734.3,543.0 740,548 C745.7,553.0 753.8,558.0 760,560 C766.2,562.0 773.0,563.3 777,560 C781.0,556.7 784.7,547.2 784,540 C783.3,532.8 777.0,523.7 773,517 C769.0,510.3 764.7,504.5 760,500 C755.3,495.5 750.7,492.2 745,490 C739.3,487.8 729.2,487.5 726,487" stroke="#9474d6" stroke-width="3.30" opacity="0.58" fill="none" stroke-linecap="round" stroke-linejoin="round"/><path d="M717,523 L737,500" stroke="#9474d6" stroke-width="3.60" opacity="0.60" fill="none" stroke-linecap="round" stroke-linejoin="round"/><path d="M730,545 L747,517" stroke="#9474d6" stroke-width="3.60" opacity="0.60" fill="none" stroke-linecap="round" stroke-linejoin="round"/><path d="M753,557 L763,545" stroke="#9474d6" stroke-width="2.70" opacity="0.45" fill="none" stroke-linecap="round" stroke-linejoin="round"/><path d="M767,447 C768.3,452.5 772.0,464.5 775,480 C778.0,495.5 783.3,530.0 785,540" stroke="#9474d6" stroke-width="2.25" opacity="0.28" fill="none" stroke-linecap="round" stroke-linejoin="round"/><path d="M660,523 C656.7,525.3 645.5,532.0 640,537 C634.5,542.0 631.5,545.0 627,553 C622.5,561.0 616.3,576.0 613,585 C609.7,594.0 607.0,599.5 607,607 C607.0,614.5 609.2,620.7 613,630 C616.8,639.3 621.0,649.7 630,663 C639.0,676.3 657.0,696.3 667,710 C677.0,723.7 683.7,733.7 690,745 C696.3,756.3 702.5,772.5 705,778" stroke="#9474d6" stroke-width="3.60" opacity="0.58" fill="none" stroke-linecap="round" stroke-linejoin="round"/><path d="M630,670 C627.0,673.7 617.0,685.0 612,692 C607.0,699.0 604.5,703.2 600,712 C595.5,720.8 589.2,734.0 585,745 C580.8,756.0 576.7,772.5 575,778" stroke="#9474d6" stroke-width="3.00" opacity="0.42" fill="none" stroke-linecap="round" stroke-linejoin="round"/><path d="M620,680 L605,712" stroke="#9474d6" stroke-width="2.40" opacity="0.30" fill="none" stroke-linecap="round" stroke-linejoin="round"/><path d="M554,572 C555.3,575.0 558.2,584.8 562,590 C565.8,595.2 570.7,599.3 577,603 C583.3,606.7 594.0,611.7 600,612 C606.0,612.3 610.8,606.2 613,605" stroke="#9474d6" stroke-width="3.30" opacity="0.50" fill="none" stroke-linecap="round" stroke-linejoin="round"/><path d="M547,568 C544.2,574.2 535.3,592.7 530,605 C524.7,617.3 520.5,629.5 515,642 C509.5,654.5 502.8,668.3 497,680 C491.2,691.7 485.3,701.2 480,712 C474.7,722.8 469.2,734.0 465,745 C460.8,756.0 456.7,772.5 455,778" stroke="#9474d6" stroke-width="3.60" opacity="0.58" fill="none" stroke-linecap="round" stroke-linejoin="round"/><path d="M469,588 C464.2,590.3 450.3,596.8 440,602 C429.7,607.2 417.0,613.2 407,619 C397.0,624.8 385.2,632.8 380,637 C374.8,641.2 375.3,641.8 376,644 C376.7,646.2 377.7,651.0 384,650 C390.3,649.0 405.0,641.8 414,638 C423.0,634.2 430.0,631.3 438,627 C446.0,622.7 458.0,614.5 462,612" stroke="#9474d6" stroke-width="3.60" opacity="0.58" fill="none" stroke-linecap="round" stroke-linejoin="round"/><path d="M418,634 C416.7,637.5 411.5,649.2 410,655 C408.5,660.8 408.0,666.0 409,669 C410.0,672.0 413.5,675.3 416,673 C418.5,670.7 422.0,660.2 424,655 C426.0,649.8 427.3,644.2 428,642" stroke="#9474d6" stroke-width="3.30" opacity="0.52" fill="none" stroke-linecap="round" stroke-linejoin="round"/><path d="M442,630 C442.2,633.3 442.3,644.5 443,650 C443.7,655.5 444.3,660.5 446,663 C447.7,665.5 451.7,668.0 453,665 C454.3,662.0 454.2,651.2 454,645 C453.8,638.8 452.3,630.8 452,628" stroke="#9474d6" stroke-width="3.30" opacity="0.52" fill="none" stroke-linecap="round" stroke-linejoin="round"/><path d="M477,595 C472.5,597.2 459.5,603.8 450,608 C440.5,612.2 429.2,616.3 420,620 C410.8,623.7 399.2,628.3 395,630" stroke="#9474d6" stroke-width="2.70" opacity="0.42" fill="none" stroke-linecap="round" stroke-linejoin="round"/><path d="M515,510 C516.2,510.8 517.8,516.7 522,515 C526.2,513.3 537.0,502.5 540,500" stroke="#9474d6" stroke-width="2.40" opacity="0.38" fill="none" stroke-linecap="round" stroke-linejoin="round"/><path d="M478,600 L482,618" stroke="#9474d6" stroke-width="2.40" opacity="0.38" fill="none" stroke-linecap="round" stroke-linejoin="round"/></g><g transform="translate(-314,-100)"><circle cx="577" cy="273" r="3.8" stroke="#999" stroke-width="1.2" fill="#fff" fill-opacity="0.6"/></g></svg>
<div class="a" style="left:959px;top:37px;width:9px;height:675px;background:#474747;"></div>
<div class="a" style="left:959px;top:37px;width:9px;height:12px;background:#555;"></div>
<svg class="a" style="left:960px;top:40px;" width="7" height="6" viewBox="0 0 7 6"><path d="M1,5 L3.5,2 L6,5" stroke="#8a8a8a" stroke-width="1.1" fill="none"/></svg>
<div class="a" style="left:960px;top:222px;width:7px;height:258px;background:#555555;"></div>
<div class="a" style="left:959px;top:700px;width:9px;height:12px;background:#555;"></div>
<svg class="a" style="left:960px;top:703px;" width="7" height="6" viewBox="0 0 7 6"><path d="M1,1.5 L3.5,4.5 L6,1.5" stroke="#8a8a8a" stroke-width="1.1" fill="none"/></svg>
<div class="a" style="left:222px;top:712px;width:746px;height:8px;background:#3a3a3a;"></div>
<div class="a t" style="left:224px;top:713px;font-size:8px;color:#bbb;">71.9</div>
<div class="a" style="left:245px;top:712px;width:55px;height:8px;background:#2c2c2c;"></div>
<div class="a" style="left:265px;top:712px;width:2px;height:8px;background:#666;"></div>
<div class="a" style="left:300px;top:712px;width:110px;height:8px;background:#3d3d3d;"></div>
<div class="a t" style="left:308px;top:711px;font-size:9px;color:#888;">−</div>
<div class="a t" style="left:325px;top:711px;font-size:9px;color:#888;">+</div>
<div class="a" style="left:338px;top:714px;width:5px;height:5px;background:#999;"></div>
<div class="a t" style="left:352px;top:713px;font-size:8px;color:#bbb;">0.0</div>
<div class="a" style="left:388px;top:712px;width:45px;height:8px;background:#2a2a2a;border-radius:8px 8px 0 0"></div>
<svg class="a" style="left:428px;top:712px;" width="50" height="8" viewBox="0 0 50 8"><path d="M3,7 Q1,3 5,2 Q8,2 8,5" stroke="#999" fill="none"/><path d="M20,5 Q20,2 24,2 Q27,3 25,7" stroke="#999" fill="none"/><circle cx="38" cy="5" r="3" stroke="#999" fill="none"/><path d="M48,2 L45,5 L48,8" stroke="#999" fill="none"/></svg>
<div class="a" style="left:476px;top:712px;width:475px;height:8px;background:#383838;"></div>
<div class="a" style="left:612px;top:713px;width:203px;height:7px;background:#505050;"></div>
<svg class="a" style="left:950px;top:712px;" width="8" height="8" viewBox="0 0 8 8"><path d="M2,2 L5,5 L2,8" stroke="#999" fill="none"/></svg>
<div class="a" style="left:968px;top:20px;width:5px;height:700px;background:#2d2d2d;"></div>
<div class="a" style="left:973px;top:20px;width:105px;height:17px;background:#313131;"></div>
<div class="a" style="left:973px;top:21px;width:77px;height:16px;background:#3d3d3d;"></div>
<div class="a t" style="left:976px;top:24px;font-size:9px;color:#7e7e7e;letter-spacing:-0.1px">Ilustración3*</div>
<svg class="a" style="left:1039px;top:25px;" width="8" height="8" viewBox="0 0 8 8"><circle cx="4" cy="4" r="2.2" fill="#bcbcbc"/></svg>
<svg class="a" style="left:1069px;top:24px;" width="8" height="8" viewBox="0 0 8 8"><path d="M1.5,2.5 L4,5 L6.5,2.5" stroke="#bbb" stroke-width="1.3" fill="none"/></svg>
<div class="a" style="left:984px;top:37px;width:85px;height:13px;background:#535353;"></div>
<div class="a" style="left:984px;top:48px;width:85px;height:1.5px;background:#dcdcdc;"></div>
<svg class="a" style="left:984px;top:37px;overflow:hidden" width="85" height="13" viewBox="0 0 85 13"><path d="M5.5,1 V12 M11.8,9.5 V12 M18.2,9.5 V12 M24.5,9.5 V12 M30.9,8 V12 M37.2,9.5 V12 M43.5,9.5 V12 M49.9,9.5 V12 M56.2,1 V12 M62.5,9.5 V12 M68.9,9.5 V12 M75.2,9.5 V12 M81.5,8 V12 " stroke="#dcdcdc" stroke-width="1" fill="none"/><text x="7.5" y="10" font-size="10" fill="#dcdcdc" font-family="Liberation Sans" textLength="5.6" lengthAdjust="spacingAndGlyphs">0</text><text x="58.2" y="10" font-size="10" fill="#dcdcdc" font-family="Liberation Sans" textLength="11.2" lengthAdjust="spacingAndGlyphs">80</text></svg>
<div class="a" style="left:973px;top:37px;width:11px;height:13px;background:#535353;"></div>
<div class="a" style="left:982.5px;top:37px;width:1.5px;height:13px;background:#dcdcdc;"></div>
<div class="a" style="left:973px;top:50px;width:11px;height:310px;background:#535353;"></div>
<div class="a" style="left:982.5px;top:50px;width:1.5px;height:310px;background:#dcdcdc;"></div>
<svg class="a" style="left:973px;top:50px;overflow:hidden" width="11" height="310" viewBox="0 0 11 310"><path d="M1,3.3 H11 M8.5,9.6 H11 M8.5,16.0 H11 M8.5,22.3 H11 M7,28.7 H11 M8.5,35.0 H11 M8.5,41.3 H11 M8.5,47.7 H11 M1,54.0 H11 M8.5,60.3 H11 M8.5,66.7 H11 M8.5,73.0 H11 M7,79.3 H11 M8.5,85.7 H11 M8.5,92.0 H11 M8.5,98.4 H11 M1,104.7 H11 M8.5,111.0 H11 M8.5,117.4 H11 M8.5,123.7 H11 M7,130.0 H11 M8.5,136.4 H11 M8.5,142.7 H11 M8.5,149.1 H11 M1,155.4 H11 M8.5,161.7 H11 M8.5,168.1 H11 M8.5,174.4 H11 M7,180.8 H11 M8.5,187.1 H11 M8.5,193.4 H11 M8.5,199.8 H11 M1,206.1 H11 M8.5,212.4 H11 M8.5,218.8 H11 M8.5,225.1 H11 M7,231.5 H11 M8.5,237.8 H11 M8.5,244.1 H11 M8.5,250.5 H11 M1,256.8 H11 M8.5,263.1 H11 M8.5,269.5 H11 M8.5,275.8 H11 M7,282.2 H11 M8.5,288.5 H11 M8.5,294.8 H11 M8.5,301.2 H11 M1,307.5 H11 " stroke="#dcdcdc" stroke-width="1" fill="none"/><text x="0" y="0" transform="translate(8.5,16.5) rotate(-90)" font-size="10" fill="#dcdcdc" font-family="Liberation Sans" textLength="11.2" lengthAdjust="spacingAndGlyphs">80</text><text x="0" y="0" transform="translate(8.5,61.6) rotate(-90)" font-size="10" fill="#dcdcdc" font-family="Liberation Sans" textLength="5.6" lengthAdjust="spacingAndGlyphs">0</text><text x="0" y="0" transform="translate(8.5,117.9) rotate(-90)" font-size="10" fill="#dcdcdc" font-family="Liberation Sans" textLength="11.2" lengthAdjust="spacingAndGlyphs">80</text><text x="0" y="0" transform="translate(8.5,174.2) rotate(-90)" font-size="10" fill="#dcdcdc" font-family="Liberation Sans" textLength="16.8" lengthAdjust="spacingAndGlyphs">160</text><text x="0" y="0" transform="translate(8.5,224.9) rotate(-90)" font-size="10" fill="#dcdcdc" font-family="Liberation Sans" textLength="16.8" lengthAdjust="spacingAndGlyphs">240</text><text x="0" y="0" transform="translate(8.5,275.6) rotate(-90)" font-size="10" fill="#dcdcdc" font-family="Liberation Sans" textLength="16.8" lengthAdjust="spacingAndGlyphs">320</text></svg>
<div class="a" style="left:984px;top:49px;width:85px;height:311px;background:#2b2b2b;"></div>
<div class="a" style="left:989px;top:104px;width:75px;height:169px;background:#ffffff;"></div>
<svg class="a" style="left:984px;top:49px;overflow:hidden" width="85" height="311" viewBox="0 0 85 311"><g transform="translate(-984,-49)"><circle cx="1017" cy="127" r="17" fill="#1f45d8"/><circle cx="1042" cy="129" r="19" fill="#5578ee"/><circle cx="1020" cy="159" r="18" fill="#e6003e"/><circle cx="1043" cy="163" r="19" fill="#c3002b"/><circle cx="1021" cy="192" r="18" fill="#f58a2d"/><circle cx="1037" cy="196" r="17" fill="#fbee2b"/><circle cx="1013" cy="232" r="20" fill="#7d4548"/><circle cx="1038" cy="236" r="19" fill="#6a2222"/><circle cx="1022" cy="255" r="16" fill="#d78c8e"/></g></svg>
<div class="a" style="left:1069px;top:37px;width:9px;height:323px;background:#474747;"></div>
<div class="a" style="left:1069px;top:37px;width:9px;height:12px;background:#555;"></div>
<svg class="a" style="left:1070px;top:40px;" width="7" height="6" viewBox="0 0 7 6"><path d="M1,5 L3.5,2 L6,5" stroke="#8a8a8a" stroke-width="1.1" fill="none"/></svg>
<div class="a" style="left:1070px;top:132px;width:7px;height:148px;background:#555555;"></div>
<div class="a" style="left:1069px;top:348px;width:9px;height:12px;background:#555;"></div>
<svg class="a" style="left:1070px;top:351px;" width="7" height="6" viewBox="0 0 7 6"><path d="M1,1.5 L3.5,4.5 L6,1.5" stroke="#8a8a8a" stroke-width="1.1" fill="none"/></svg>
<div class="a" style="left:973px;top:360px;width:105px;height:11px;background:#3d3d3d;"></div>
<div class="a t" style="left:975px;top:362px;font-size:9px;color:#bbb;">80.7</div>
<div class="a" style="left:994px;top:361px;width:50px;height:9px;background:#2a2a2a;"></div>
<div class="a" style="left:1016px;top:361px;width:3px;height:9px;background:#666;"></div>
<div class="a t" style="left:1053px;top:360px;font-size:10px;color:#888;">−</div>
<div class="a t" style="left:1068px;top:360px;font-size:10px;color:#888;">+</div>
<div class="a" style="left:973px;top:371px;width:105px;height:4px;background:#2d2d2d;"></div>
<div class="a" style="left:973px;top:375px;width:105px;height:15px;background:#313131;"></div>
<div class="a" style="left:973px;top:375px;width:77px;height:15px;background:#3d3d3d;"></div>
<div class="a t" style="left:976px;top:378px;font-size:9px;color:#7e7e7e;letter-spacing:-0.1px">Ilustración4*</div>
<svg class="a" style="left:1039px;top:379px;" width="8" height="8" viewBox="0 0 8 8"><circle cx="4" cy="4" r="2.2" fill="#bcbcbc"/></svg>
<svg class="a" style="left:1069px;top:378px;" width="8" height="8" viewBox="0 0 8 8"><path d="M1.5,2.5 L4,5 L6.5,2.5" stroke="#bbb" stroke-width="1.3" fill="none"/></svg>
<div class="a" style="left:984px;top:390px;width:85px;height:13px;background:#535353;"></div>
<div class="a" style="left:984px;top:401px;width:85px;height:1.5px;background:#dcdcdc;"></div>
<svg class="a" style="left:984px;top:390px;overflow:hidden" width="85" height="13" viewBox="0 0 85 13"><path d="M3.3,9.5 V12 M8.2,9.5 V12 M13.1,8 V12 M18.0,9.5 V12 M22.9,9.5 V12 M27.8,9.5 V12 M32.7,1 V12 M37.6,9.5 V12 M42.5,9.5 V12 M47.4,9.5 V12 M52.3,8 V12 M57.2,9.5 V12 M62.1,9.5 V12 M67.0,9.5 V12 M71.9,1 V12 M76.8,9.5 V12 M81.7,9.5 V12 " stroke="#dcdcdc" stroke-width="1" fill="none"/><text x="34.7" y="10" font-size="10" fill="#dcdcdc" font-family="Liberation Sans" textLength="16.8" lengthAdjust="spacingAndGlyphs">100</text><text x="73.9" y="10" font-size="10" fill="#dcdcdc" font-family="Liberation Sans" textLength="16.8" lengthAdjust="spacingAndGlyphs">200</text></svg>
<div class="a" style="left:973px;top:390px;width:11px;height:12px;background:#535353;"></div>
<div class="a" style="left:982.5px;top:390px;width:1.5px;height:12px;background:#dcdcdc;"></div>
<div class="a" style="left:973px;top:402px;width:11px;height:310px;background:#535353;"></div>
<div class="a" style="left:982.5px;top:402px;width:1.5px;height:310px;background:#dcdcdc;"></div>
<svg class="a" style="left:973px;top:402px;overflow:hidden" width="11" height="310" viewBox="0 0 11 310"><path d="M8.5,1.3 H11 M8.5,6.2 H11 M8.5,11.2 H11 M1,16.1 H11 M8.5,21.0 H11 M8.5,26.0 H11 M8.5,30.9 H11 M7,35.8 H11 M8.5,40.7 H11 M8.5,45.7 H11 M8.5,50.6 H11 M1,55.5 H11 M8.5,60.4 H11 M8.5,65.4 H11 M8.5,70.3 H11 M7,75.2 H11 M8.5,80.1 H11 M8.5,85.1 H11 M8.5,90.0 H11 M1,94.9 H11 M8.5,99.8 H11 M8.5,104.8 H11 M8.5,109.7 H11 M7,114.6 H11 M8.5,119.5 H11 M8.5,124.4 H11 M8.5,129.4 H11 M1,134.3 H11 M8.5,139.2 H11 M8.5,144.1 H11 M8.5,149.1 H11 M7,154.0 H11 M8.5,158.9 H11 M8.5,163.8 H11 M8.5,168.8 H11 M1,173.7 H11 M8.5,178.6 H11 M8.5,183.6 H11 M8.5,188.5 H11 M7,193.4 H11 M8.5,198.3 H11 M8.5,203.2 H11 M8.5,208.2 H11 M1,213.1 H11 M8.5,218.0 H11 M8.5,223.0 H11 M8.5,227.9 H11 M7,232.8 H11 M8.5,237.7 H11 M8.5,242.6 H11 M8.5,247.6 H11 M1,252.5 H11 M8.5,257.4 H11 M8.5,262.4 H11 M8.5,267.3 H11 M7,272.2 H11 M8.5,277.1 H11 M8.5,282.0 H11 M8.5,287.0 H11 M1,291.9 H11 M8.5,296.8 H11 M8.5,301.8 H11 M8.5,306.7 H11 " stroke="#dcdcdc" stroke-width="1" fill="none"/><text x="0" y="0" transform="translate(8.5,34.9) rotate(-90)" font-size="10" fill="#dcdcdc" font-family="Liberation Sans" textLength="16.8" lengthAdjust="spacingAndGlyphs">100</text><text x="0" y="0" transform="translate(8.5,63.1) rotate(-90)" font-size="10" fill="#dcdcdc" font-family="Liberation Sans" textLength="5.6" lengthAdjust="spacingAndGlyphs">0</text><text x="0" y="0" transform="translate(8.5,113.7) rotate(-90)" font-size="10" fill="#dcdcdc" font-family="Liberation Sans" textLength="16.8" lengthAdjust="spacingAndGlyphs">100</text><text x="0" y="0" transform="translate(8.5,153.1) rotate(-90)" font-size="10" fill="#dcdcdc" font-family="Liberation Sans" textLength="16.8" lengthAdjust="spacingAndGlyphs">200</text><text x="0" y="0" transform="translate(8.5,192.5) rotate(-90)" font-size="10" fill="#dcdcdc" font-family="Liberation Sans" textLength="16.8" lengthAdjust="spacingAndGlyphs">300</text><text x="0" y="0" transform="translate(8.5,231.9) rotate(-90)" font-size="10" fill="#dcdcdc" font-family="Liberation Sans" textLength="16.8" lengthAdjust="spacingAndGlyphs">400</text><text x="0" y="0" transform="translate(8.5,271.3) rotate(-90)" font-size="10" fill="#dcdcdc" font-family="Liberation Sans" textLength="16.8" lengthAdjust="spacingAndGlyphs">500</text><text x="0" y="0" transform="translate(8.5,310.7) rotate(-90)" font-size="10" fill="#dcdcdc" font-family="Liberation Sans" textLength="16.8" lengthAdjust="spacingAndGlyphs">600</text></svg>
<div class="a" style="left:984px;top:401px;width:85px;height:311px;background:#2b2b2b;"></div>
<div class="a" style="left:984px;top:457px;width:84px;height:142px;background:#000000;"></div>
<svg class="a" style="left:984px;top:457px;overflow:hidden" width="84" height="142" viewBox="0 0 84 142"><g transform="translate(-984,-457)"><path d="M1026,470 Q1005,458 992,472 Q986,482 987,494 L991,494 Q995,484 1006,482 Q1016,480 1026,482Z" fill="#d81f33"/><path d="M1026,470 Q1012,468 1004,476 Q996,484 992,494 L995,494 Q1000,486 1010,484 Q1018,482 1026,484Z" fill="#3b3fc0"/><path d="M1026,470 Q1047,458 1060,472 Q1066,482 1065,494 L1061,494 Q1057,484 1046,482 Q1036,480 1026,482Z" fill="#3b3fc0"/><path d="M1050,466 Q1060,472 1064,488 L1061,494 Q1058,482 1048,478Z" fill="#d81f33"/><path d="M1004,462 Q1015,460 1026,461 L1026,478 L1010,480Z" fill="#d81f33"/><path d="M1026,461 Q1040,460 1050,465 L1044,480 L1026,478Z" fill="#3b3fc0"/><path d="M996,470 Q1000,464 1006,462 L1010,480 L998,486Z" fill="#3b3fc0"/><circle cx="987.5" cy="496" r="2.8" fill="#f1c52a"/><circle cx="1065" cy="496" r="2.8" fill="#f1c52a"/><path d="M1008,490 Q1006,505 1012,512 L1016,500Z" fill="#4a2418"/><path d="M1044,490 Q1046,505 1040,512 L1036,500Z" fill="#4a2418"/><ellipse cx="1026" cy="488" rx="19" ry="17" fill="#f1c52a"/><ellipse cx="1026" cy="489" rx="16" ry="14.5" fill="#5a2c1e"/><ellipse cx="1026" cy="494" rx="16" ry="14" fill="#f1dfe0"/><circle cx="1018.8" cy="488" r="6.5" fill="#d08ab8"/><circle cx="1035.6" cy="488" r="6.5" fill="#d08ab8"/><circle cx="1018.8" cy="488" r="5" fill="#fbeef5"/><circle cx="1035.6" cy="488" r="5" fill="#fbeef5"/><circle cx="1018.8" cy="488" r="2.6" fill="#a0508a"/><circle cx="1035.6" cy="488" r="2.6" fill="#a0508a"/><ellipse cx="1026" cy="509" rx="10" ry="2.8" fill="#f1c52a"/><path d="M1012,511 Q1026,507 1041,511 L1044,545 L1026,550 L1009,545Z" fill="#3b3fc0"/><path d="M1026,510 Q1035,510 1041,511 L1044,545 L1026,550Z" fill="#d81f33"/><circle cx="1026" cy="517" r="3.2" fill="#f1c52a"/><circle cx="1026" cy="531" r="3.2" fill="#f1c52a"/><ellipse cx="1008" cy="515" rx="7.5" ry="8" fill="#d81f33"/><path d="M1001,515 Q1003,508 1008,507 L1007,523 Q1002,521 1001,515Z" fill="#3b3fc0"/><ellipse cx="1046" cy="515" rx="7.5" ry="8" fill="#3b3fc0"/><path d="M1053,515 Q1051,508 1046,507 L1047,523 Q1052,521 1053,515Z" fill="#d81f33"/><rect x="1004.5" y="522" width="2.6" height="16" fill="#e9d9d4"/><rect x="1046" y="522" width="2.6" height="16" fill="#e9d9d4"/><ellipse cx="1006" cy="539.5" rx="4.5" ry="2.5" fill="#f1c52a"/><ellipse cx="1047" cy="539.5" rx="4.5" ry="2.5" fill="#f1c52a"/><path d="M1001,542 Q1008,539 1013,544 L1012,555 Q1006,558 1002,554Z" fill="#d81f33"/><path d="M1040,544 Q1046,539 1052,542 L1052,554 Q1047,558 1041,555Z" fill="#4a44c8"/><path d="M1009,543 L1026,548 L1044,543 L1042,556 L1026,558 L1011,556Z" fill="#3b3fc0"/><path d="M1026,548 L1044,543 L1042,556 L1026,558Z" fill="#d81f33"/><path d="M1009,543 L1026,550 L1044,543" stroke="#f1c52a" stroke-width="2" fill="none"/><rect x="1016" y="556" width="2.6" height="20" fill="#ecdcd8"/><rect x="1035" y="556" width="2.6" height="20" fill="#ecdcd8"/><rect x="1014" y="575" width="6" height="8" fill="#f1c52a"/><rect x="1033" y="575" width="6" height="8" fill="#f1c52a"/><path d="M1013,583 L1020,583 L1021,592 Q1015,595 1008,593 Q1008,587 1013,583Z" fill="#5a58d8"/><path d="M1033,583 L1040,583 Q1046,589 1046,594 Q1039,596 1033,593Z" fill="#d81b2a"/></g></svg>
<div class="a" style="left:1069px;top:390px;width:9px;height:322px;background:#474747;"></div>
<div class="a" style="left:1069px;top:390px;width:9px;height:12px;background:#555;"></div>
<svg class="a" style="left:1070px;top:393px;" width="7" height="6" viewBox="0 0 7 6"><path d="M1,5 L3.5,2 L6,5" stroke="#8a8a8a" stroke-width="1.1" fill="none"/></svg>
<div class="a" style="left:1070px;top:415px;width:7px;height:225px;background:#525252;"></div>
<div class="a" style="left:1069px;top:700px;width:9px;height:12px;background:#555;"></div>
<svg class="a" style="left:1070px;top:703px;" width="7" height="6" viewBox="0 0 7 6"><path d="M1,1.5 L3.5,4.5 L6,1.5" stroke="#8a8a8a" stroke-width="1.1" fill="none"/></svg>
<div class="a" style="left:973px;top:712px;width:105px;height:8px;background:#3d3d3d;"></div>
<div class="a t" style="left:975px;top:713px;font-size:9px;color:#bbb;">50.0</div>
<div class="a" style="left:994px;top:713px;width:50px;height:7px;background:#2a2a2a;"></div>
<div class="a" style="left:1016px;top:713px;width:3px;height:7px;background:#666;"></div>
<div class="a t" style="left:1053px;top:712px;font-size:10px;color:#888;">−</div>
<div class="a t" style="left:1068px;top:712px;font-size:10px;color:#888;">+</div>
<div class="a" style="left:1078px;top:0px;width:194px;height:17px;background:#383838;"></div>
<div class="a" style="left:1078px;top:16px;width:194px;height:1px;background:#2c2c2c;"></div>
<div class="a t" style="left:1081px;top:3px;font-size:12px;color:#7a7a7a;">«</div>
<div class="a" style="left:1093px;top:4px;width:3px;height:9px;background:#5a5a5a;"></div>
<div class="a t" style="left:1244px;top:3px;font-size:12px;color:#7a7a7a;">›</div>
<div class="a t" style="left:1261px;top:3px;font-size:12px;color:#7a7a7a;">»</div>
<div class="a" style="left:1078px;top:17px;width:12px;height:703px;background:#323232;"></div>
<div class="a" style="left:1090px;top:17px;width:182px;height:17px;background:#393939;"></div>
<div class="a" style="left:1093px;top:19px;width:10px;height:13px;background:#343434;"></div>
<svg class="a" style="left:1094px;top:22px;" width="8" height="7" viewBox="0 0 8 7"><path d="M1,1H7M1,3.5H7M1,6H7" stroke="#888" stroke-width="0.9"/></svg>
<div class="a" style="left:1105px;top:19px;width:62px;height:14px;background:#4a4a4a;"></div>
<svg class="a" style="left:1108px;top:21px;" width="12" height="11" viewBox="0 0 12 11"><rect x="1" y="2" width="10" height="8" stroke="#c8c8c8" fill="none"/><path d="M3,0.5 H12 V8" stroke="#c8c8c8" fill="none"/></svg>
<div class="a t" style="left:1124px;top:23px;font-size:8.5px;color:#d8d8d8;letter-spacing:-0.3px">Navegador</div>
<div class="a" style="left:1168px;top:19px;width:23px;height:14px;background:#434343;"></div>
<div class="a" style="left:1192px;top:19px;width:21px;height:14px;background:#434343;"></div>
<div class="a" style="left:1214px;top:19px;width:23px;height:14px;background:#434343;"></div>
<svg class="a" style="left:1173px;top:21px;" width="12" height="10" viewBox="0 0 12 10"><path d="M1,9 Q1,2 6,2 Q11,2 11,9" stroke="#6a6a6a" fill="none"/><path d="M6,4V9" stroke="#6a6a6a"/></svg>
<svg class="a" style="left:1196px;top:21px;" width="12" height="10" viewBox="0 0 12 10"><path d="M1,8 Q3,2 6,2 Q9,2 11,8 H1" stroke="#6a6a6a" fill="none"/></svg>
<svg class="a" style="left:1219px;top:21px;" width="12" height="10" viewBox="0 0 12 10"><rect x="1" y="2" width="10" height="7" stroke="#6a6a6a" fill="none"/></svg>
<div class="a" style="left:1090px;top:33px;width:182px;height:199px;background:#2e2e2e;"></div>
<div class="a" style="left:1099px;top:35px;width:165px;height:197px;background:#ffffff;"></div>
<svg class="a" style="left:1099px;top:35px;overflow:hidden" width="165" height="197" viewBox="0 0 165 197"><g transform="scale(0.29255) translate(-314,-100)" filter="url(#skn)"><path d="M514,222 C516.3,217.7 521.2,203.7 528,196 C534.8,188.3 543.8,180.7 555,176 C566.2,171.3 582.5,168.7 595,168 C607.5,167.3 620.8,168.0 630,172 C639.2,176.0 645.0,183.2 650,192 C655.0,200.8 658.3,219.5 660,225" stroke="#8a7cc4" stroke-width="3.30" opacity="0.24" fill="none" stroke-linecap="round" stroke-linejoin="round"/><path d="M520,212 C524.2,208.7 535.0,197.3 545,192 C555.0,186.7 574.2,182.0 580,180" stroke="#8a7cc4" stroke-width="2.70" opacity="0.18" fill="none" stroke-linecap="round" stroke-linejoin="round"/><path d="M650,205 C651.7,210.8 658.0,229.2 660,240 C662.0,250.8 661.7,265.0 662,270" stroke="#8a7cc4" stroke-width="3.75" opacity="0.33" fill="none" stroke-linecap="round" stroke-linejoin="round"/><path d="M515,215 C514.7,220.8 512.5,236.7 513,250 C513.5,263.3 517.2,287.5 518,295" stroke="#8a7cc4" stroke-width="3.00" opacity="0.24" fill="none" stroke-linecap="round" stroke-linejoin="round"/><path d="M570,210 C569.7,215.8 568.8,231.7 568,245 C567.2,258.3 565.5,282.5 565,290" stroke="#8a7cc4" stroke-width="3.00" opacity="0.18" fill="none" stroke-linecap="round" stroke-linejoin="round"/><path d="M578,268 C578.3,264.3 578.3,252.7 580,246 C581.7,239.3 583.7,232.8 588,228 C592.3,223.2 600.3,218.0 606,217 C611.7,216.0 618.0,219.2 622,222 C626.0,224.8 628.7,229.8 630,234 C631.3,238.2 630.0,244.8 630,247" stroke="#8a7cc4" stroke-width="4.50" opacity="0.48" fill="none" stroke-linecap="round" stroke-linejoin="round"/><path d="M524,303 C528.3,299.3 540.7,287.5 550,281 C559.3,274.5 569.7,268.3 580,264 C590.3,259.7 601.3,256.2 612,255 C622.7,253.8 638.7,256.7 644,257" stroke="#8a7cc4" stroke-width="5.10" opacity="0.43" fill="none" stroke-linecap="round" stroke-linejoin="round"/><path d="M545,235 C546.2,233.3 549.5,227.5 552,225 C554.5,222.5 558.7,220.8 560,220" stroke="#8a7cc4" stroke-width="2.40" opacity="0.21" fill="none" stroke-linecap="round" stroke-linejoin="round"/><path d="M518,300 C518.7,303.7 519.2,314.8 522,322 C524.8,329.2 528.7,337.0 535,343 C541.3,349.0 550.8,354.8 560,358 C569.2,361.2 580.3,363.3 590,362 C599.7,360.7 609.7,356.2 618,350 C626.3,343.8 633.8,335.0 640,325 C646.2,315.0 651.3,300.5 655,290 C658.7,279.5 660.8,266.7 662,262" stroke="#8a7cc4" stroke-width="4.20" opacity="0.43" fill="none" stroke-linecap="round" stroke-linejoin="round"/><path d="M505,300 C506.7,305.8 509.2,324.7 515,335 C520.8,345.3 530.8,355.8 540,362 C549.2,368.2 565.0,370.3 570,372" stroke="#8a7cc4" stroke-width="2.40" opacity="0.13" fill="none" stroke-linecap="round" stroke-linejoin="round"/><path d="M665,280 L663,330" stroke="#8a7cc4" stroke-width="2.25" opacity="0.13" fill="none" stroke-linecap="round" stroke-linejoin="round"/><path d="M585,362 C585.2,363.8 585.5,369.2 586,373 C586.5,376.8 587.7,383.0 588,385" stroke="#8a7cc4" stroke-width="3.30" opacity="0.33" fill="none" stroke-linecap="round" stroke-linejoin="round"/><path d="M588,385 C590.2,385.5 596.8,388.7 601,388 C605.2,387.3 611.0,382.2 613,381" stroke="#8a7cc4" stroke-width="3.00" opacity="0.27" fill="none" stroke-linecap="round" stroke-linejoin="round"/><path d="M616,345 C616.3,348.0 618.5,357.0 618,363 C617.5,369.0 613.8,378.0 613,381" stroke="#8a7cc4" stroke-width="3.60" opacity="0.33" fill="none" stroke-linecap="round" stroke-linejoin="round"/><path d="M618,364 C621.7,363.0 632.7,359.3 640,358 C647.3,356.7 658.3,356.3 662,356" stroke="#8a7cc4" stroke-width="5.10" opacity="0.48" fill="none" stroke-linecap="round" stroke-linejoin="round"/><path d="M662,356 C669.7,362.7 691.3,381.8 708,396 C724.7,410.2 753.0,433.5 762,441" stroke="#8a7cc4" stroke-width="4.20" opacity="0.43" fill="none" stroke-linecap="round" stroke-linejoin="round"/><path d="M628,364 C631.3,365.0 641.8,367.8 648,370 C654.2,372.2 662.2,375.8 665,377" stroke="#8a7cc4" stroke-width="3.00" opacity="0.17" fill="none" stroke-linecap="round" stroke-linejoin="round"/><path d="M578,375 C575.0,376.8 564.3,380.7 560,386 C555.7,391.3 553.3,403.5 552,407" stroke="#8a7cc4" stroke-width="3.60" opacity="0.33" fill="none" stroke-linecap="round" stroke-linejoin="round"/><path d="M552,407 C550.5,412.2 547.7,427.8 543,438 C538.3,448.2 529.7,457.3 524,468 C518.3,478.7 514.7,489.2 509,502 C503.3,514.8 496.7,530.7 490,545 C483.3,559.3 472.5,580.8 469,588" stroke="#8a7cc4" stroke-width="3.90" opacity="0.41" fill="none" stroke-linecap="round" stroke-linejoin="round"/><path d="M576,395 C572.8,400.8 563.0,416.8 557,430 C551.0,443.2 545.7,459.3 540,474 C534.3,488.7 529.7,503.7 523,518 C516.3,532.3 507.7,547.2 500,560 C492.3,572.8 480.8,589.2 477,595" stroke="#8a7cc4" stroke-width="3.30" opacity="0.30" fill="none" stroke-linecap="round" stroke-linejoin="round"/><path d="M546,441 C545.5,444.5 541.0,456.5 543,462 C545.0,467.5 551.5,471.5 558,474 C564.5,476.5 578.0,476.5 582,477" stroke="#8a7cc4" stroke-width="3.00" opacity="0.27" fill="none" stroke-linecap="round" stroke-linejoin="round"/><path d="M573,471 C572.0,478.8 569.0,505.3 567,518 C565.0,530.7 563.2,538.0 561,547 C558.8,556.0 555.2,567.8 554,572" stroke="#8a7cc4" stroke-width="3.60" opacity="0.36" fill="none" stroke-linecap="round" stroke-linejoin="round"/><path d="M659,398 C658.5,403.0 658.0,419.3 656,428 C654.0,436.7 650.8,439.7 647,450 C643.2,460.3 635.3,483.3 633,490" stroke="#8a7cc4" stroke-width="3.90" opacity="0.41" fill="none" stroke-linecap="round" stroke-linejoin="round"/><path d="M659,402 C665.5,406.0 686.5,419.2 698,426 C709.5,432.8 723.0,440.2 728,443" stroke="#8a7cc4" stroke-width="3.60" opacity="0.37" fill="none" stroke-linecap="round" stroke-linejoin="round"/><path d="M728,443 C728.5,445.7 729.5,451.2 731,459 C732.5,466.8 736.0,484.8 737,490" stroke="#8a7cc4" stroke-width="3.90" opacity="0.41" fill="none" stroke-linecap="round" stroke-linejoin="round"/><path d="M731,445 C733.3,444.0 740.0,439.7 745,439 C750.0,438.3 757.5,439.7 761,441 C764.5,442.3 765.2,446.0 766,447" stroke="#8a7cc4" stroke-width="3.00" opacity="0.27" fill="none" stroke-linecap="round" stroke-linejoin="round"/><path d="M766,447 C766.2,450.8 767.3,461.2 767,470 C766.7,478.8 764.5,495.0 764,500" stroke="#8a7cc4" stroke-width="3.30" opacity="0.33" fill="none" stroke-linecap="round" stroke-linejoin="round"/><path d="M633,487 C637.5,490.3 650.0,499.8 660,507 C670.0,514.2 683.0,523.3 693,530 C703.0,536.7 711.0,537.0 720,547 C729.0,557.0 740.8,576.2 747,590 C753.2,603.8 752.3,616.7 757,630 C761.7,643.3 769.0,656.7 775,670 C781.0,683.3 788.0,697.5 793,710 C798.0,722.5 801.8,733.7 805,745 C808.2,756.3 810.8,772.5 812,778" stroke="#8a7cc4" stroke-width="3.60" opacity="0.36" fill="none" stroke-linecap="round" stroke-linejoin="round"/><path d="M726,487 C724.0,488.5 715.7,491.8 714,496 C712.3,500.2 714.0,506.3 716,512 C718.0,517.7 722.0,524.0 726,530 C730.0,536.0 734.3,543.0 740,548 C745.7,553.0 753.8,558.0 760,560 C766.2,562.0 773.0,563.3 777,560 C781.0,556.7 784.7,547.2 784,540 C783.3,532.8 777.0,523.7 773,517 C769.0,510.3 764.7,504.5 760,500 C755.3,495.5 750.7,492.2 745,490 C739.3,487.8 729.2,487.5 726,487" stroke="#8a7cc4" stroke-width="3.30" opacity="0.35" fill="none" stroke-linecap="round" stroke-linejoin="round"/><path d="M717,523 L737,500" stroke="#8a7cc4" stroke-width="3.60" opacity="0.36" fill="none" stroke-linecap="round" stroke-linejoin="round"/><path d="M730,545 L747,517" stroke="#8a7cc4" stroke-width="3.60" opacity="0.36" fill="none" stroke-linecap="round" stroke-linejoin="round"/><path d="M753,557 L763,545" stroke="#8a7cc4" stroke-width="2.70" opacity="0.27" fill="none" stroke-linecap="round" stroke-linejoin="round"/><path d="M767,447 C768.3,452.5 772.0,464.5 775,480 C778.0,495.5 783.3,530.0 785,540" stroke="#8a7cc4" stroke-width="2.25" opacity="0.17" fill="none" stroke-linecap="round" stroke-linejoin="round"/><path d="M660,523 C656.7,525.3 645.5,532.0 640,537 C634.5,542.0 631.5,545.0 627,553 C622.5,561.0 616.3,576.0 613,585 C609.7,594.0 607.0,599.5 607,607 C607.0,614.5 609.2,620.7 613,630 C616.8,639.3 621.0,649.7 630,663 C639.0,676.3 657.0,696.3 667,710 C677.0,723.7 683.7,733.7 690,745 C696.3,756.3 702.5,772.5 705,778" stroke="#8a7cc4" stroke-width="3.60" opacity="0.35" fill="none" stroke-linecap="round" stroke-linejoin="round"/><path d="M630,670 C627.0,673.7 617.0,685.0 612,692 C607.0,699.0 604.5,703.2 600,712 C595.5,720.8 589.2,734.0 585,745 C580.8,756.0 576.7,772.5 575,778" stroke="#8a7cc4" stroke-width="3.00" opacity="0.25" fill="none" stroke-linecap="round" stroke-linejoin="round"/><path d="M620,680 L605,712" stroke="#8a7cc4" stroke-width="2.40" opacity="0.18" fill="none" stroke-linecap="round" stroke-linejoin="round"/><path d="M554,572 C555.3,575.0 558.2,584.8 562,590 C565.8,595.2 570.7,599.3 577,603 C583.3,606.7 594.0,611.7 600,612 C606.0,612.3 610.8,606.2 613,605" stroke="#8a7cc4" stroke-width="3.30" opacity="0.30" fill="none" stroke-linecap="round" stroke-linejoin="round"/><path d="M547,568 C544.2,574.2 535.3,592.7 530,605 C524.7,617.3 520.5,629.5 515,642 C509.5,654.5 502.8,668.3 497,680 C491.2,691.7 485.3,701.2 480,712 C474.7,722.8 469.2,734.0 465,745 C460.8,756.0 456.7,772.5 455,778" stroke="#8a7cc4" stroke-width="3.60" opacity="0.35" fill="none" stroke-linecap="round" stroke-linejoin="round"/><path d="M469,588 C464.2,590.3 450.3,596.8 440,602 C429.7,607.2 417.0,613.2 407,619 C397.0,624.8 385.2,632.8 380,637 C374.8,641.2 375.3,641.8 376,644 C376.7,646.2 377.7,651.0 384,650 C390.3,649.0 405.0,641.8 414,638 C423.0,634.2 430.0,631.3 438,627 C446.0,622.7 458.0,614.5 462,612" stroke="#8a7cc4" stroke-width="3.60" opacity="0.35" fill="none" stroke-linecap="round" stroke-linejoin="round"/><path d="M418,634 C416.7,637.5 411.5,649.2 410,655 C408.5,660.8 408.0,666.0 409,669 C410.0,672.0 413.5,675.3 416,673 C418.5,670.7 422.0,660.2 424,655 C426.0,649.8 427.3,644.2 428,642" stroke="#8a7cc4" stroke-width="3.30" opacity="0.31" fill="none" stroke-linecap="round" stroke-linejoin="round"/><path d="M442,630 C442.2,633.3 442.3,644.5 443,650 C443.7,655.5 444.3,660.5 446,663 C447.7,665.5 451.7,668.0 453,665 C454.3,662.0 454.2,651.2 454,645 C453.8,638.8 452.3,630.8 452,628" stroke="#8a7cc4" stroke-width="3.30" opacity="0.31" fill="none" stroke-linecap="round" stroke-linejoin="round"/><path d="M477,595 C472.5,597.2 459.5,603.8 450,608 C440.5,612.2 429.2,616.3 420,620 C410.8,623.7 399.2,628.3 395,630" stroke="#8a7cc4" stroke-width="2.70" opacity="0.25" fill="none" stroke-linecap="round" stroke-linejoin="round"/><path d="M515,510 C516.2,510.8 517.8,516.7 522,515 C526.2,513.3 537.0,502.5 540,500" stroke="#8a7cc4" stroke-width="2.40" opacity="0.23" fill="none" stroke-linecap="round" stroke-linejoin="round"/><path d="M478,600 L482,618" stroke="#8a7cc4" stroke-width="2.40" opacity="0.23" fill="none" stroke-linecap="round" stroke-linejoin="round"/></g></svg>
<div class="a" style="left:1091px;top:212.5px;width:181px;height:1.3px;background:#b02a44;"></div>
<div class="a" style="left:1090px;top:232px;width:182px;height:34px;background:#464646;"></div>
<svg class="a" style="left:1094px;top:236px;" width="62" height="30" viewBox="0 0 62 30"><rect x="0.5" y="2" width="58" height="9" fill="#555" stroke="#5e5e5e"/><path d="M10,10 L58,3 V10Z" fill="#262626"/><rect x="0.5" y="18" width="58" height="9" fill="#555" stroke="#5e5e5e"/><path d="M1,19 L1,26 H25Z" fill="#262626"/><path d="M30,26 Q35,19 45,19 Q55,20 58,26Z" fill="#262626"/><rect x="32" y="0" width="3" height="14" fill="#8a8a8a"/><rect x="29" y="15" width="3" height="14" fill="#8a8a8a"/></svg>
<div class="a t" style="right:81px;top:237px;font-size:11px;color:#dcdcdc;text-align:right;letter-spacing:-0.6px">71.9</div>
<div class="a t" style="right:81px;top:253px;font-size:11px;color:#dcdcdc;text-align:right;letter-spacing:-0.6px">0.0</div>
<svg class="a" style="left:1191.5px;top:235.5px;" width="14" height="14" viewBox="0 0 14 14"><circle cx="7" cy="7" r="6" stroke="#c8c8c8" stroke-width="1.1" fill="none"/><path d="M3.5,7H10.5" stroke="#c8c8c8" stroke-width="1.2"/></svg>
<svg class="a" style="left:1207px;top:235.5px;" width="14" height="14" viewBox="0 0 14 14"><circle cx="7" cy="7" r="6" stroke="#c8c8c8" stroke-width="1.1" fill="none"/><path d="M3.5,7H10.5M7,3.5V10.5" stroke="#c8c8c8" stroke-width="1.2"/></svg>
<svg class="a" style="left:1223px;top:235.5px;" width="14" height="14" viewBox="0 0 14 14"><circle cx="7" cy="7" r="6" stroke="#c8c8c8" stroke-width="1.1" fill="none"/><rect x="4" y="4" width="6" height="6" rx="1" fill="#c8c8c8"/></svg>
<svg class="a" style="left:1193px;top:252px;" width="14" height="14" viewBox="0 0 14 14"><path d="M4,4 Q7,2 10,4 Q13,8 10,11 Q7,13 4,11" stroke="#c8c8c8" stroke-width="1.1" fill="none"/><path d="M1,7 L4,4 L5,8Z" fill="#c8c8c8"/></svg>
<svg class="a" style="left:1208px;top:252px;" width="14" height="14" viewBox="0 0 14 14"><path d="M10,4 Q7,2 4,4 Q1,8 4,11 Q7,13 10,11" stroke="#c8c8c8" stroke-width="1.1" fill="none"/><path d="M13,7 L10,4 L9,8Z" fill="#c8c8c8"/></svg>
<svg class="a" style="left:1223px;top:252px;" width="14" height="14" viewBox="0 0 14 14"><circle cx="7" cy="7" r="6" stroke="#c8c8c8" stroke-width="1.1" fill="none"/><path d="M7,3V8" stroke="#c8c8c8" stroke-width="1.4"/><circle cx="7" cy="8" r="1.8" fill="#c8c8c8"/></svg>
<div class="a" style="left:1239px;top:236px;width:1px;height:28px;background:#5a5a5a;"></div>
<svg class="a" style="left:1245px;top:236px;" width="12" height="13" viewBox="0 0 12 13"><rect x="0.5" y="0.5" width="6" height="6" stroke="#c8c8c8" fill="none"/><rect x="4.5" y="5.5" width="6" height="6" stroke="#c8c8c8" fill="none"/><path d="M2.5,2.5 H4.5 V4.5 M6.5,7.5 H8.5 V9.5" stroke="#c8c8c8" fill="none"/></svg>
<svg class="a" style="left:1259px;top:236px;" width="12" height="13" viewBox="0 0 12 13"><rect x="0.5" y="0.5" width="11" height="11" stroke="#c8c8c8" fill="none"/><path d="M3,9 L9,3 M3,9 V6 M3,9 H6 M9,3 H6 M9,3 V6" stroke="#c8c8c8" fill="none"/></svg>
<svg class="a" style="left:1243px;top:253px;" width="14" height="12" viewBox="0 0 14 12"><path d="M1,1.5 L5,6 L1,10.5Z" stroke="#c8c8c8" fill="none"/><path d="M13,1.5 L9,6 L13,10.5Z" fill="#c8c8c8"/><path d="M7,0.5V11.5" stroke="#c8c8c8"/></svg>
<svg class="a" style="left:1259px;top:252px;" width="12" height="14" viewBox="0 0 12 14"><path d="M1,0.5 H11 L6,5.5Z" fill="#c8c8c8"/><path d="M1,13.5 H11 L6,8.5Z" stroke="#c8c8c8" fill="none"/><path d="M0,7 H12" stroke="#c8c8c8"/></svg>
<div class="a" style="left:1090px;top:266px;width:182px;height:2px;background:#2e2e2e;"></div>
<div class="a" style="left:1090px;top:268px;width:182px;height:14px;background:#393939;"></div>
<div class="a" style="left:1093px;top:271px;width:9px;height:10px;background:#343434;"></div>
<svg class="a" style="left:1094px;top:273px;" width="8" height="7" viewBox="0 0 8 7"><path d="M1,1H7M1,3.5H7M1,6H7" stroke="#888" stroke-width="0.9"/></svg>
<div class="a" style="left:1106px;top:270px;width:22px;height:12px;background:#474747;"></div>
<svg class="a" style="left:1109px;top:271px;" width="14" height="10" viewBox="0 0 14 10"><path d="M2,8 Q2,2 7,2 Q12,2 12,8Z" stroke="#6a6a6a" fill="none"/></svg>
<div class="a" style="left:1130px;top:270px;width:92px;height:12px;background:#4b4b4b;"></div>
<svg class="a" style="left:1133px;top:271px;" width="14" height="12" viewBox="0 0 14 12"><path d="M1,3 L6,1 L11,3 L6,5Z" stroke="#c8c8c8" fill="none"/><path d="M1,3 V10 L6,12 V5 M11,3 V6" stroke="#c8c8c8" fill="none"/><rect x="8" y="7" width="5" height="5" fill="#c8c8c8"/></svg>
<div class="a t" style="left:1150px;top:273px;font-size:8px;color:#d2d2d2;letter-spacing:-0.35px">Propiedad de la capa</div>
<div class="a" style="left:1225px;top:270px;width:22px;height:12px;background:#474747;"></div>
<svg class="a" style="left:1230px;top:271px;" width="12" height="10" viewBox="0 0 12 10"><path d="M1,9 Q2,3 7,3 Q11,4 11,9Z" stroke="#6a6a6a" fill="none"/></svg>
<div class="a" style="left:1090px;top:282px;width:182px;height:121px;background:#424242;"></div>
<div class="a" style="left:1090px;top:282px;width:182px;height:2px;background:#3a3a3a;"></div>
<div class="a" style="left:1126px;top:293px;width:132px;height:1px;background:#585858;"></div>
<div class="a t" style="left:1098px;top:288px;font-size:9px;color:#d8d8d8;letter-spacing:-0.3px">Efecto</div>
<div class="a" style="left:1197px;top:299px;width:62px;height:16px;background:#505050;"></div>
<svg class="a" style="left:1198px;top:299px;" width="60" height="16" viewBox="0 0 60 16"><circle cx="8" cy="8" r="5" stroke="#c8c8c8" stroke-width="1.1" fill="none"/><rect x="20.0" y="3.0" width="1.2" height="1.2" fill="#c8c8c8"/><rect x="20.0" y="7.4" width="1.2" height="1.2" fill="#c8c8c8"/><rect x="20.0" y="11.8" width="1.2" height="1.2" fill="#c8c8c8"/><rect x="22.2" y="5.2" width="1.2" height="1.2" fill="#c8c8c8"/><rect x="22.2" y="9.6" width="1.2" height="1.2" fill="#c8c8c8"/><rect x="24.4" y="3.0" width="1.2" height="1.2" fill="#c8c8c8"/><rect x="24.4" y="7.4" width="1.2" height="1.2" fill="#c8c8c8"/><rect x="24.4" y="11.8" width="1.2" height="1.2" fill="#c8c8c8"/><rect x="26.6" y="5.2" width="1.2" height="1.2" fill="#c8c8c8"/><rect x="26.6" y="9.6" width="1.2" height="1.2" fill="#c8c8c8"/><rect x="28.8" y="3.0" width="1.2" height="1.2" fill="#c8c8c8"/><rect x="28.8" y="7.4" width="1.2" height="1.2" fill="#c8c8c8"/><rect x="28.8" y="11.8" width="1.2" height="1.2" fill="#c8c8c8"/><rect x="35" y="3" width="7" height="8" stroke="#c8c8c8" fill="none"/><rect x="38" y="6" width="7" height="8" stroke="#c8c8c8" fill="#505050"/><path d="M49,6 L52,9 L55,6" stroke="#c8c8c8" fill="none" stroke-width="1.2"/></svg>
<div class="a" style="left:1170px;top:322px;width:88px;height:1px;background:#585858;"></div>
<div class="a t" style="left:1098px;top:317px;font-size:9px;color:#d8d8d8;letter-spacing:-0.35px">Color de expresión</div>
<div class="a" style="left:1104px;top:330px;width:115px;height:16px;background:#505050;"></div>
<svg class="a" style="left:1139px;top:332px;" width="12" height="12" viewBox="0 0 12 12"><circle cx="6" cy="4" r="3.2" fill="#e05060" opacity="0.9"/><circle cx="4" cy="8" r="3.2" fill="#50c050" opacity="0.9"/><circle cx="8" cy="8" r="3.2" fill="#4a8ae0" opacity="0.9"/></svg>
<div class="a t" style="left:1154px;top:333px;font-size:9.5px;color:#d8d8d8;">Color</div>
<svg class="a" style="left:1207px;top:334px;" width="9" height="8" viewBox="0 0 9 8"><path d="M1,2.5 L4.5,6 L8,2.5" stroke="#c8c8c8" stroke-width="1.2" fill="none"/></svg>
<div class="a" style="left:1262px;top:282px;width:10px;height:121px;background:#3c3c3c;"></div>
<div class="a" style="left:1090px;top:403px;width:182px;height:2px;background:#2e2e2e;"></div>
<div class="a" style="left:1090px;top:405px;width:182px;height:315px;background:#414141;"></div>
<div class="a" style="left:1090px;top:405px;width:182px;height:14px;background:#393939;"></div>
<div class="a" style="left:1094px;top:407px;width:10px;height:11px;background:#343434;"></div>
<svg class="a" style="left:1095px;top:409px;" width="8" height="7" viewBox="0 0 8 7"><path d="M1,1H7M1,3.5H7M1,6H7" stroke="#888" stroke-width="0.9"/></svg>
<div class="a" style="left:1106px;top:407px;width:40px;height:12px;background:#4a4a4a;"></div>
<svg class="a" style="left:1109px;top:407px;" width="13" height="13" viewBox="0 0 13 13"><path d="M1,4 L6.5,1 L12,4 L6.5,7Z" stroke="#c8c8c8" fill="none"/><path d="M1,7 L6.5,10 L12,7 M1,10 L6.5,13 L12,10" stroke="#c8c8c8" fill="none"/></svg>
<div class="a t" style="left:1127px;top:411px;font-size:8.5px;color:#d0d0d0;">Capa</div>
<div class="a" style="left:1148px;top:407px;width:22px;height:12px;background:#474747;"></div>
<svg class="a" style="left:1152px;top:409px;" width="14" height="9" viewBox="0 0 14 9"><path d="M3,1 H11 Q13,4 11,7 H3 M3,1 L1,3" stroke="#6a6a6a" fill="none"/></svg>
<div class="a" style="left:1172px;top:407px;width:22px;height:12px;background:#474747;"></div>
<svg class="a" style="left:1176px;top:408px;" width="14" height="10" viewBox="0 0 14 10"><path d="M1,9 V4 L8,1 H13 V9" stroke="#6a6a6a" fill="none"/></svg>
<div class="a" style="left:1090px;top:419px;width:172px;height:56px;background:#4a4a4a;"></div>
<div class="a" style="left:1092px;top:422px;width:30px;height:16px;background:#575757;"></div>
<svg class="a" style="left:1094px;top:424px;" width="27" height="12" viewBox="0 0 27 12"><rect x="1.5" y="1" width="11" height="10" rx="1" stroke="#999" stroke-width="1.1" fill="none"/><path d="M18,4.5 L21,7.5 L24,4.5" stroke="#aaa" stroke-width="1.1" fill="none"/></svg>
<div class="a" style="left:1124px;top:422px;width:57px;height:16px;background:#575757;"></div>
<div class="a t" style="left:1134px;top:425px;font-size:10px;color:#d0d0d0;letter-spacing:-0.3px">Normal</div>
<svg class="a" style="left:1169px;top:426px;" width="10" height="8" viewBox="0 0 10 8"><path d="M1,2.5 L4.5,6 L8,2.5" stroke="#aaa" stroke-width="1.1" fill="none"/></svg>
<svg class="a" style="left:1185px;top:426px;" width="56" height="8" viewBox="0 0 56 8"><rect x="0" y="0" width="4" height="4" fill="#ffffff"/><rect x="0" y="4" width="4" height="4" fill="#d6d6d6"/><rect x="4" y="4" width="4" height="4" fill="#ffffff"/><rect x="4" y="0" width="4" height="4" fill="#d6d6d6"/><rect x="8" y="0" width="4" height="4" fill="#ffffff"/><rect x="8" y="4" width="4" height="4" fill="#d6d6d6"/><rect x="12" y="4" width="4" height="4" fill="#ffffff"/><rect x="12" y="0" width="4" height="4" fill="#d6d6d6"/><rect x="16" y="0" width="4" height="4" fill="#ffffff"/><rect x="16" y="4" width="4" height="4" fill="#d6d6d6"/><rect x="20" y="4" width="4" height="4" fill="#ffffff"/><rect x="20" y="0" width="4" height="4" fill="#d6d6d6"/><rect x="24" y="0" width="4" height="4" fill="#ffffff"/><rect x="24" y="4" width="4" height="4" fill="#d6d6d6"/><rect x="28" y="4" width="4" height="4" fill="#ffffff"/><rect x="28" y="0" width="4" height="4" fill="#d6d6d6"/><rect x="32" y="0" width="4" height="4" fill="#ffffff"/><rect x="32" y="4" width="4" height="4" fill="#d6d6d6"/><rect x="36" y="4" width="4" height="4" fill="#ffffff"/><rect x="36" y="0" width="4" height="4" fill="#d6d6d6"/><rect x="40" y="0" width="4" height="4" fill="#ffffff"/><rect x="40" y="4" width="4" height="4" fill="#d6d6d6"/><rect x="44" y="4" width="4" height="4" fill="#ffffff"/><rect x="44" y="0" width="4" height="4" fill="#d6d6d6"/><rect x="48" y="0" width="4" height="4" fill="#ffffff"/><rect x="48" y="4" width="4" height="4" fill="#d6d6d6"/><rect x="52" y="4" width="4" height="4" fill="#ffffff"/><rect x="52" y="0" width="4" height="4" fill="#d6d6d6"/></svg>
<div class="a" style="left:1241px;top:422px;width:3px;height:16px;background:#6a6a6a;"></div>
<div class="a t" style="left:1246px;top:424px;font-size:11px;color:#dcdcdc;letter-spacing:-0.8px">100</div>
<svg class="a" style="left:1262px;top:423px;" width="9" height="14" viewBox="0 0 9 14"><path d="M1.5,5 L4.5,2 L7.5,5 M1.5,9 L4.5,12 L7.5,9" stroke="#c8c8c8" stroke-width="1.1" fill="none"/></svg>
<svg class="a" style="left:1110px;top:440px;" width="13" height="13" viewBox="0 0 13 13"><rect x="1" y="1" width="8" height="8" stroke="#999" fill="none"/><rect x="4" y="4" width="8" height="8" stroke="#c8c8c8" fill="#777"/></svg>
<svg class="a" style="left:1127px;top:440px;" width="13" height="13" viewBox="0 0 13 13"><path d="M6.5,1 V12 M2,4 H11 M3,12 H10 M4,4 L6.5,12 L9,4" stroke="#c8c8c8" fill="none"/></svg>
<svg class="a" style="left:1144px;top:440px;" width="13" height="13" viewBox="0 0 13 13"><rect x="2" y="1" width="5" height="9" rx="1" fill="#c8c8c8"/><path d="M7,8 L12,12" stroke="#c8c8c8"/></svg>
<svg class="a" style="left:1161px;top:440px;" width="13" height="13" viewBox="0 0 13 13"><rect x="2" y="6" width="9" height="7" fill="#c8c8c8"/><path d="M4,6 V4 Q6.5,0 9,4 V6" stroke="#c8c8c8" stroke-width="1.2" fill="none"/></svg>
<svg class="a" style="left:1178px;top:440px;" width="13" height="13" viewBox="0 0 13 13"><rect x="1" y="6" width="7" height="7" fill="#c8c8c8"/><rect x="6" y="1" width="3" height="3" fill="#c8c8c8"/><rect x="10" y="4" width="3" height="3" fill="#c8c8c8"/><rect x="9" y="8" width="3" height="3" fill="#c8c8c8"/></svg>
<svg class="a" style="left:1194px;top:440px;" width="13" height="13" viewBox="0 0 13 13"><rect x="1" y="1" width="10" height="10" rx="2" stroke="#6a6a6a" stroke-width="1.3" fill="none"/><path d="M8,8 L12,12" stroke="#6a6a6a"/></svg>
<svg class="a" style="left:1206px;top:442px;" width="8" height="8" viewBox="0 0 8 8"><path d="M1,3 L4,6 L7,3" stroke="#6a6a6a" fill="none"/></svg>
<svg class="a" style="left:1222px;top:440px;" width="13" height="13" viewBox="0 0 13 13"><path d="M1,12 L12,1 M1,1 V12 H12" stroke="#6a6a6a" stroke-width="1.2" fill="none"/></svg>
<svg class="a" style="left:1234px;top:442px;" width="8" height="8" viewBox="0 0 8 8"><path d="M1,3 L4,6 L7,3" stroke="#6a6a6a" fill="none"/></svg>
<div class="a" style="left:1244px;top:438px;width:28px;height:17px;background:#555;border:1px solid #666"></div>
<svg class="a" style="left:1248px;top:440px;" width="12" height="12" viewBox="0 0 12 12"><rect x="0" y="0" width="8" height="8" fill="#4a8ae8"/><rect x="4" y="4" width="8" height="8" fill="#ffffff"/><rect x="4" y="4" width="4" height="4" fill="#2a5ab8"/></svg>
<svg class="a" style="left:1261px;top:442px;" width="8" height="8" viewBox="0 0 8 8"><path d="M1,3 L4,6 L7,3" stroke="#c8c8c8" fill="none"/></svg>
<svg class="a" style="left:1093px;top:458px;" width="13" height="13" viewBox="0 0 13 13"><rect x="1" y="1" width="11" height="11" stroke="#c8c8c8" fill="none"/><path d="M1,6.5 H12 M3,1 V12" stroke="#c8c8c8"/></svg>
<svg class="a" style="left:1149px;top:458px;" width="13" height="13" viewBox="0 0 13 13"><rect x="1" y="1" width="9" height="9" stroke="#c8c8c8" fill="none"/><circle cx="10" cy="10" r="2.5" stroke="#c8c8c8" fill="#4a4a4a"/></svg>
<svg class="a" style="left:1164px;top:458px;" width="13" height="13" viewBox="0 0 13 13"><rect x="1" y="1" width="9" height="9" stroke="#c8c8c8" fill="none"/><circle cx="5.5" cy="5.5" r="2.5" stroke="#c8c8c8" fill="none"/><circle cx="10" cy="10" r="2.5" stroke="#c8c8c8" fill="#4a4a4a"/></svg>
<svg class="a" style="left:1180px;top:458px;" width="13" height="13" viewBox="0 0 13 13"><path d="M1,3 H5 L6,4 H11 V10 H1Z" fill="#c8c8c8"/><circle cx="10" cy="10" r="2.5" stroke="#c8c8c8" fill="#4a4a4a"/></svg>
<svg class="a" style="left:1195px;top:458px;" width="13" height="13" viewBox="0 0 13 13"><rect x="1" y="5" width="7" height="7" stroke="#6a6a6a" fill="none"/><rect x="5" y="1" width="7" height="7" stroke="#6a6a6a" fill="none"/></svg>
<svg class="a" style="left:1210px;top:458px;" width="13" height="13" viewBox="0 0 13 13"><rect x="1" y="5" width="7" height="7" stroke="#6a6a6a" fill="none"/><rect x="5" y="1" width="7" height="7" stroke="#6a6a6a" fill="none"/></svg>
<svg class="a" style="left:1228px;top:458px;" width="13" height="13" viewBox="0 0 13 13"><rect x="0" y="0" width="12" height="12" rx="1.5" fill="#d8d8d8"/><circle cx="6" cy="6" r="3" fill="#444"/></svg>
<svg class="a" style="left:1243px;top:458px;" width="13" height="13" viewBox="0 0 13 13"><rect x="1" y="1" width="11" height="11" stroke="#6a6a6a" fill="none"/><circle cx="6.5" cy="6.5" r="2.5" fill="#6a6a6a"/></svg>
<svg class="a" style="left:1258px;top:457px;" width="13" height="13" viewBox="0 0 13 13"><rect x="2" y="3" width="8" height="10" stroke="#c8c8c8" fill="none"/><path d="M1,2.5 H11 M4,1 H8 M4,5 V11 M6,5 V11 M8,5 V11" stroke="#c8c8c8"/></svg>
<div class="a" style="left:1090px;top:475px;width:172px;height:1px;background:#333;"></div>
<div class="a" style="left:1090px;top:476px;width:172px;height:31px;background:#414141;"></div>
<div class="a" style="left:1107px;top:476px;width:1px;height:31px;background:#353535;"></div>
<div class="a" style="left:1122px;top:476px;width:1px;height:31px;background:#353535;"></div>
<div class="a" style="left:1090px;top:507px;width:172px;height:1px;background:#333;"></div>
<div class="a" style="left:1123px;top:476px;width:139px;height:31px;background:#646c8a;"></div>
<svg class="a" style="left:1092px;top:486px;" width="14" height="10" viewBox="0 0 14 10"><path d="M1,5 Q7,-1 13,5 Q7,11 1,5Z" fill="#cfcfcf"/><circle cx="7" cy="5" r="2.2" fill="#414141"/><circle cx="7" cy="5" r="1" fill="#cfcfcf"/></svg>
<svg class="a" style="left:1108px;top:485px;" width="14" height="13" viewBox="0 0 14 13"><path d="M1,12 H13 M2,11 L11,2" stroke="#cfcfcf" stroke-width="1.2" fill="none"/></svg>
<div class="a" style="left:1124px;top:477px;width:25px;height:29px;background:#eeeeee;"></div>
<div class="a" style="left:1125px;top:478px;width:23px;height:27px;background:#333;"></div>
<svg class="a" style="left:1126px;top:479px;overflow:hidden" width="21" height="25" viewBox="0 0 21 25"><rect width="21" height="25" fill="#fff"/><rect x="0" y="0" width="4" height="4" fill="#d9d9d9"/><rect x="0" y="8" width="4" height="4" fill="#d9d9d9"/><rect x="0" y="16" width="4" height="4" fill="#d9d9d9"/><rect x="0" y="24" width="4" height="4" fill="#d9d9d9"/><rect x="4" y="4" width="4" height="4" fill="#d9d9d9"/><rect x="4" y="12" width="4" height="4" fill="#d9d9d9"/><rect x="4" y="20" width="4" height="4" fill="#d9d9d9"/><rect x="8" y="0" width="4" height="4" fill="#d9d9d9"/><rect x="8" y="8" width="4" height="4" fill="#d9d9d9"/><rect x="8" y="16" width="4" height="4" fill="#d9d9d9"/><rect x="8" y="24" width="4" height="4" fill="#d9d9d9"/><rect x="12" y="4" width="4" height="4" fill="#d9d9d9"/><rect x="12" y="12" width="4" height="4" fill="#d9d9d9"/><rect x="12" y="20" width="4" height="4" fill="#d9d9d9"/><rect x="16" y="0" width="4" height="4" fill="#d9d9d9"/><rect x="16" y="8" width="4" height="4" fill="#d9d9d9"/><rect x="16" y="16" width="4" height="4" fill="#d9d9d9"/><rect x="16" y="24" width="4" height="4" fill="#d9d9d9"/><rect x="20" y="4" width="4" height="4" fill="#d9d9d9"/><rect x="20" y="12" width="4" height="4" fill="#d9d9d9"/><rect x="20" y="20" width="4" height="4" fill="#d9d9d9"/></svg>
<div class="a t" style="left:1154px;top:481px;font-size:9px;color:#dedede;letter-spacing:-0.5px">100 % Normal</div>
<div class="a t" style="left:1153px;top:495px;font-size:9.5px;color:#dedede;letter-spacing:-0.2px">Capa 2</div>
<div class="a" style="left:1090px;top:508px;width:172px;height:31px;background:#414141;"></div>
<div class="a" style="left:1107px;top:508px;width:1px;height:31px;background:#353535;"></div>
<div class="a" style="left:1122px;top:508px;width:1px;height:31px;background:#353535;"></div>
<div class="a" style="left:1090px;top:539px;width:172px;height:1px;background:#333;"></div>
<div class="a" style="left:1095px;top:520px;width:7px;height:7px;background:transparent;border:1px solid #4c4c4c;border-radius:1px"></div>
<div class="a" style="left:1111px;top:520px;width:7px;height:7px;background:transparent;border:1px solid #4c4c4c;border-radius:1px"></div>
<svg class="a" style="left:1126px;top:511px;overflow:hidden" width="21" height="25" viewBox="0 0 21 25"><rect width="21" height="25" fill="#fff"/><rect x="0" y="0" width="4" height="4" fill="#d9d9d9"/><rect x="0" y="8" width="4" height="4" fill="#d9d9d9"/><rect x="0" y="16" width="4" height="4" fill="#d9d9d9"/><rect x="0" y="24" width="4" height="4" fill="#d9d9d9"/><rect x="4" y="4" width="4" height="4" fill="#d9d9d9"/><rect x="4" y="12" width="4" height="4" fill="#d9d9d9"/><rect x="4" y="20" width="4" height="4" fill="#d9d9d9"/><rect x="8" y="0" width="4" height="4" fill="#d9d9d9"/><rect x="8" y="8" width="4" height="4" fill="#d9d9d9"/><rect x="8" y="16" width="4" height="4" fill="#d9d9d9"/><rect x="8" y="24" width="4" height="4" fill="#d9d9d9"/><rect x="12" y="4" width="4" height="4" fill="#d9d9d9"/><rect x="12" y="12" width="4" height="4" fill="#d9d9d9"/><rect x="12" y="20" width="4" height="4" fill="#d9d9d9"/><rect x="16" y="0" width="4" height="4" fill="#d9d9d9"/><rect x="16" y="8" width="4" height="4" fill="#d9d9d9"/><rect x="16" y="16" width="4" height="4" fill="#d9d9d9"/><rect x="16" y="24" width="4" height="4" fill="#d9d9d9"/><rect x="20" y="4" width="4" height="4" fill="#d9d9d9"/><rect x="20" y="12" width="4" height="4" fill="#d9d9d9"/><rect x="20" y="20" width="4" height="4" fill="#d9d9d9"/></svg>
<div class="a t" style="left:1154px;top:513px;font-size:9px;color:#dedede;letter-spacing:-0.5px">100 % Normal</div>
<div class="a t" style="left:1153px;top:527px;font-size:9.5px;color:#dedede;letter-spacing:-0.2px">Capa 1</div>
<div class="a" style="left:1090px;top:540px;width:172px;height:31px;background:#414141;"></div>
<div class="a" style="left:1107px;top:540px;width:1px;height:31px;background:#353535;"></div>
<div class="a" style="left:1122px;top:540px;width:1px;height:31px;background:#353535;"></div>
<div class="a" style="left:1090px;top:571px;width:172px;height:1px;background:#333;"></div>
<svg class="a" style="left:1092px;top:550px;" width="14" height="10" viewBox="0 0 14 10"><path d="M1,5 Q7,-1 13,5 Q7,11 1,5Z" fill="#cfcfcf"/><circle cx="7" cy="5" r="2.2" fill="#414141"/><circle cx="7" cy="5" r="1" fill="#cfcfcf"/></svg>
<div class="a" style="left:1111px;top:552px;width:7px;height:7px;background:transparent;border:1px solid #4c4c4c;border-radius:1px"></div>
<div class="a" style="left:1126px;top:542px;width:22px;height:27px;background:#ffffff;"></div>
<div class="a" style="left:1158px;top:542px;width:12px;height:13px;background:#ffffff;border:1px solid #888"></div>
<svg class="a" style="left:1160px;top:544px;" width="8" height="9" viewBox="0 0 8 9"><path d="M1,1 H7 V8 H3 L1,6Z" stroke="#333" fill="none"/></svg>
<div class="a t" style="left:1154px;top:559px;font-size:9.5px;color:#dedede;">Papel</div>
<div class="a" style="left:1090px;top:572px;width:172px;height:148px;background:#414141;"></div>
<div class="a" style="left:1107px;top:572px;width:1px;height:0px;background:#353535;"></div>
<div class="a" style="left:1262px;top:476px;width:10px;height:244px;background:#3c3c3c;"></div>
<div class="a" style="left:1262px;top:476px;width:1px;height:244px;background:#353535;"></div>
</body></html>
